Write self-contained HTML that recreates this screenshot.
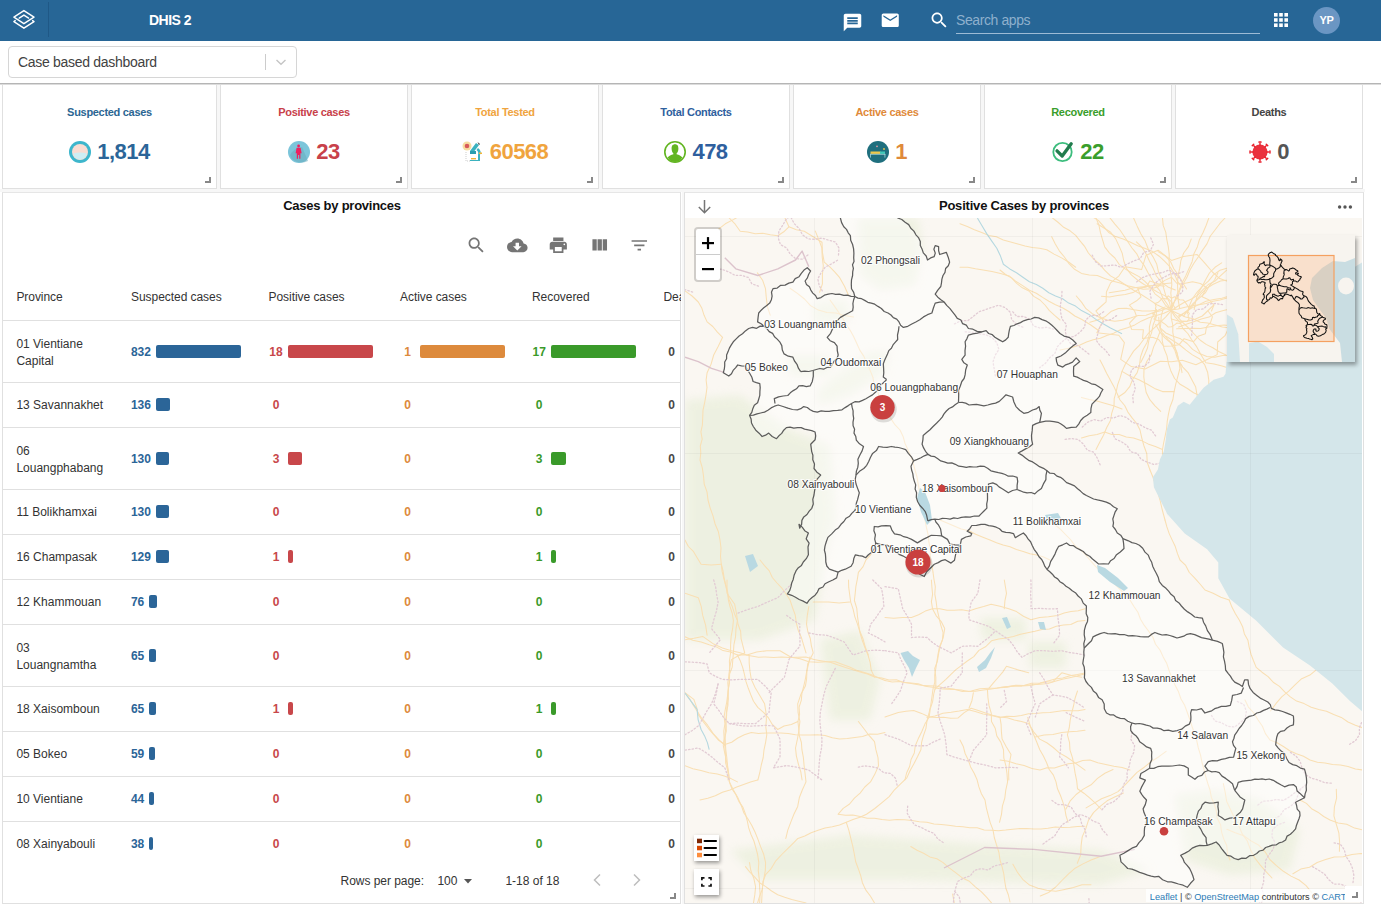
<!DOCTYPE html>
<html><head><meta charset="utf-8">
<style>
*{box-sizing:border-box}
html,body{margin:0;padding:0;width:1381px;height:905px;overflow:hidden;background:#fff;font-family:"Liberation Sans",sans-serif;color:#212121}
.a{position:absolute}
#hdr{left:0;top:0;width:1381px;height:41px;background:#276696}
.card{background:#fff;border:1px solid #e0e0e0;border-top:none}
.ct{position:absolute;left:0;right:0;top:21px;text-align:center;font-size:11px;font-weight:700;letter-spacing:-0.3px}
.cv{position:absolute;left:0;right:0;top:54px;text-align:center;font-size:22px;font-weight:700;letter-spacing:-0.5px;height:26px;line-height:26px;white-space:nowrap}
.cv svg{vertical-align:top;margin-top:2px;margin-right:6px}
.rh{position:absolute;width:6px;height:6px;border-right:2px solid #888;border-bottom:2px solid #888}
.t12{font-size:12px;line-height:17px;color:#333}
.b{font-weight:700;font-size:12px}
.hline{position:absolute;left:3px;width:677px;height:1px;background:#e0e0e0}
.bar{position:absolute;height:13px;border-radius:2px}
</style></head><body>
<div id="hdr" class="a">
  <!-- logo -->
  <svg class="a" style="left:0;top:0" width="48" height="40" viewBox="0 0 48 40" fill="none" stroke="#fff" stroke-width="1.45" stroke-linejoin="round" stroke-linecap="round">
    <path d="M23.9 10.6 L34 17.2 L23.9 23.7 L13.9 17.2 Z"/>
    <path d="M19.2 18.1 L23.9 15.1 L28.6 18.1"/>
    <path d="M15.2 20.6 L13.9 21.6 L23.9 28.2 L34 21.6 L32.6 20.6"/>
  </svg>
  <div class="a" style="left:48px;top:2px;width:1px;height:35px;background:#1f5886"></div>
  <div class="a" style="left:149px;top:12px;font-size:14px;font-weight:700;color:#fff;letter-spacing:-0.5px;line-height:17px">DHIS 2</div>
  <!-- chat -->
  <svg class="a" style="left:842px;top:12px" width="21" height="21" viewBox="0 0 24 24" fill="#fff"><path d="M20 2H4c-1.1 0-1.99.9-1.99 2L2 22l4-4h14c1.1 0 2-.9 2-2V4c0-1.1-.9-2-2-2zM6 9h12v2H6V9zm0 3h12v2H6v-2zm12-4H6V6h12v2z"/></svg>
  <!-- mail -->
  <svg class="a" style="left:880px;top:10px" width="20.5" height="20.5" viewBox="0 0 24 24" fill="#fff"><path d="M20 4H4c-1.1 0-1.99.9-1.99 2L2 18c0 1.1.9 2 2 2h16c1.1 0 2-.9 2-2V6c0-1.1-.9-2-2-2zm0 4l-8 5-8-5V6l8 5 8-5v2z"/></svg>
  <!-- search -->
  <svg class="a" style="left:929px;top:10px" width="20.5" height="20.5" viewBox="0 0 24 24" fill="#fff"><path d="M15.5 14h-.79l-.28-.27C15.41 12.59 16 11.11 16 9.5 16 5.91 13.09 3 9.5 3S3 5.91 3 9.5 5.91 16 9.5 16c1.61 0 3.09-.59 4.23-1.57l.27.28v.79l5 4.99L20.49 19l-4.99-5zm-6 0C7.01 14 5 11.99 5 9.5S7.01 5 9.5 5 14 7.01 14 9.5 11.99 14 9.5 14z"/></svg>
  <div class="a" style="left:956px;top:12px;font-size:14px;color:#8eb0cd;letter-spacing:-0.4px;line-height:17px">Search apps</div>
  <div class="a" style="left:956px;top:33px;width:304px;height:1px;background:#9dbbd5"></div>
  <!-- apps -->
  <svg class="a" style="left:1274px;top:13px" width="14" height="14" viewBox="0 0 14 14" fill="#fff">
    <rect x="0" y="0" width="3.6" height="3.6"/><rect x="5.2" y="0" width="3.6" height="3.6"/><rect x="10.4" y="0" width="3.6" height="3.6"/>
    <rect x="0" y="5.2" width="3.6" height="3.6"/><rect x="5.2" y="5.2" width="3.6" height="3.6"/><rect x="10.4" y="5.2" width="3.6" height="3.6"/>
    <rect x="0" y="10.4" width="3.6" height="3.6"/><rect x="5.2" y="10.4" width="3.6" height="3.6"/><rect x="10.4" y="10.4" width="3.6" height="3.6"/>
  </svg>
  <div class="a" style="left:1313px;top:7px;width:27px;height:27px;border-radius:50%;background:#6b96c3;color:#fff;font-size:11px;font-weight:700;text-align:center;line-height:27px;letter-spacing:-0.3px">YP</div>
</div>

<!-- dashboard selector -->
<div class="a" style="left:8px;top:46px;width:289px;height:32px;border:1px solid #d6d6d6;border-radius:4px;background:#fff"></div>
<div class="a" style="left:18px;top:54px;font-size:14px;color:#424242;letter-spacing:-0.3px;line-height:17px">Case based dashboard</div>
<div class="a" style="left:265px;top:54px;width:1px;height:16px;background:#ccc"></div>
<svg class="a" style="left:275px;top:56px" width="12" height="12" viewBox="0 0 12 12" fill="none" stroke="#c5c5c5" stroke-width="1.4"><path d="M1.5 4 L6 8.2 L10.5 4"/></svg>

<!-- shadow line -->
<div class="a" style="left:0;top:83px;width:1381px;height:1px;background:#b5b5b5"></div>
<div class="a" style="left:0;top:84px;width:1381px;height:1px;background:#dcdcdc"></div>

<div class="a card" style="left:2px;top:85px;width:215px;height:104px"><div class="ct" style="color:#2c6693">Suspected cases</div><div class="cv" style="color:#2b6598"><svg width="22" height="22" viewBox="0 0 22 22"><circle cx="11" cy="11" r="11" fill="#3db6cc"/><circle cx="11" cy="11" r="8" fill="#f9dcd2"/><path d="M4.2 12.5 Q11 10.5 17.8 12.5 Q17 17.5 11 18.8 Q5 17.5 4.2 12.5Z" fill="#cdeef4"/></svg>1,814</div><div class="rh" style="right:5px;bottom:5px"></div></div>
<div class="a card" style="left:220px;top:85px;width:188px;height:104px"><div class="ct" style="color:#c8414a">Positive cases</div><div class="cv" style="color:#c8414a"><svg width="22" height="22" viewBox="0 0 22 22"><circle cx="11" cy="11" r="11" fill="#7cc5da"/><path d="M2 14 Q6 7 14 6 L20 20 Q11 24 4 18Z" fill="#6aaec0" opacity=".6"/><circle cx="10.6" cy="5" r="1.4" fill="#ee1f5f"/><path d="M8.6 6.8h4l1 5.4h-1.2v5.6h-1.2v-3.8h-1.2v3.8H8.8v-5.6H7.6z" fill="#ee1f5f"/></svg>23</div><div class="rh" style="right:5px;bottom:5px"></div></div>
<div class="a card" style="left:411px;top:85px;width:188px;height:104px"><div class="ct" style="color:#f0a43e">Total Tested</div><div class="cv" style="color:#f0a43e"><svg width="22" height="22" viewBox="0 0 22 22"><circle cx="5" cy="5" r="4.5" fill="#f6dca0"/><circle cx="5" cy="5" r="2.3" fill="#d85a5a"/><path d="M14 2 L17 4 L11 12 L8 10Z" fill="#3bb2bf"/><path d="M8 10 h6 v3 h-6z" fill="#2a9eb0"/><path d="M16 7 Q20 10 18 14 L18 20 H8 V19 H16 V14 Q17 11 14.5 9Z" fill="#3bb2bf"/><rect x="9" y="17" width="5" height="1.4" fill="#f3b536"/><rect x="17" y="11.5" width="3" height="1.5" fill="#f3b536"/><path d="M4 11 V20 H8" stroke="#999" stroke-width=".5" fill="none" stroke-dasharray="1 1"/><path d="M15.5 1 L18 3 L17 4 Z" fill="#333"/></svg>60568</div><div class="rh" style="right:5px;bottom:5px"></div></div>
<div class="a card" style="left:602px;top:85px;width:188px;height:104px"><div class="ct" style="color:#2f5f9e">Total Contacts</div><div class="cv" style="color:#2f5f9e"><svg width="22" height="22" viewBox="0 0 22 22"><circle cx="11" cy="11" r="10.2" fill="#fff" stroke="#62b521" stroke-width="1.6"/><path d="M11 3.3 C8.2 3.3 7.6 5.5 7.6 7.5 C7.6 10 8.6 11.8 9.4 12.4 L9.4 13.2 C7 14 4.8 14.8 3.6 16.4 Q6.5 21 11 21 Q15.5 21 18.4 16.4 C17.2 14.8 15 14 12.6 13.2 L12.6 12.4 C13.4 11.8 14.4 10 14.4 7.5 C14.4 5.5 13.8 3.3 11 3.3Z" fill="#62b521"/></svg>478</div><div class="rh" style="right:5px;bottom:5px"></div></div>
<div class="a card" style="left:793px;top:85px;width:188px;height:104px"><div class="ct" style="color:#df8a3a">Active cases</div><div class="cv" style="color:#df8a3a"><svg width="22" height="22" viewBox="0 0 22 22"><circle cx="11" cy="11" r="11" fill="#1f6f7e"/><rect x="3.5" y="10.5" width="10" height="2.4" fill="#efc94c"/><rect x="13" y="10.5" width="5" height="2.4" fill="#40c9b9"/><rect x="3.3" y="12.9" width="15" height="0.7" fill="#b8dfe4"/><rect x="3.3" y="12.9" width="0.7" height="3.7" fill="#b8dfe4"/><rect x="17.6" y="12.9" width="0.7" height="3.7" fill="#b8dfe4"/><circle cx="10" cy="5.3" r="0.9" fill="#e39aa2"/><circle cx="17" cy="8" r="0.9" fill="#efc94c"/></svg>1</div><div class="rh" style="right:5px;bottom:5px"></div></div>
<div class="a card" style="left:984px;top:85px;width:188px;height:104px"><div class="ct" style="color:#3a9e2c">Recovered</div><div class="cv" style="color:#3a9e2c"><svg width="22" height="22" viewBox="0 0 22 22"><circle cx="10.5" cy="11" r="9.2" fill="none" stroke="#3cbd7d" stroke-width="1.8"/><path d="M5 9.8 L10.2 15 L19.2 2.8" fill="none" stroke="#217c4d" stroke-width="3.3" stroke-linecap="round" stroke-linejoin="round"/></svg>22</div><div class="rh" style="right:5px;bottom:5px"></div></div>
<div class="a card" style="left:1175px;top:85px;width:188px;height:104px"><div class="ct" style="color:#444">Deaths</div><div class="cv" style="color:#555"><svg width="22" height="22" viewBox="0 0 22 22"><g fill="#e8202c"><circle cx="11" cy="11" r="7.6" opacity=".92"/><g transform="rotate(0 11 11)"><rect x="10.3" y="1.6" width="1.4" height="3"/><rect x="9.3" y="0.3" width="3.4" height="1.5" rx=".6"/></g><g transform="rotate(45 11 11)"><rect x="10.3" y="1.6" width="1.4" height="3"/><rect x="9.3" y="0.3" width="3.4" height="1.5" rx=".6"/></g><g transform="rotate(90 11 11)"><rect x="10.3" y="1.6" width="1.4" height="3"/><rect x="9.3" y="0.3" width="3.4" height="1.5" rx=".6"/></g><g transform="rotate(135 11 11)"><rect x="10.3" y="1.6" width="1.4" height="3"/><rect x="9.3" y="0.3" width="3.4" height="1.5" rx=".6"/></g><g transform="rotate(180 11 11)"><rect x="10.3" y="1.6" width="1.4" height="3"/><rect x="9.3" y="0.3" width="3.4" height="1.5" rx=".6"/></g><g transform="rotate(225 11 11)"><rect x="10.3" y="1.6" width="1.4" height="3"/><rect x="9.3" y="0.3" width="3.4" height="1.5" rx=".6"/></g><g transform="rotate(270 11 11)"><rect x="10.3" y="1.6" width="1.4" height="3"/><rect x="9.3" y="0.3" width="3.4" height="1.5" rx=".6"/></g><g transform="rotate(315 11 11)"><rect x="10.3" y="1.6" width="1.4" height="3"/><rect x="9.3" y="0.3" width="3.4" height="1.5" rx=".6"/></g></g></svg>0</div><div class="rh" style="right:5px;bottom:5px"></div></div>
<div class="a card" style="left:2px;top:192px;width:679px;height:712px;border-top:1px solid #e6e6e6"></div>
<div class="a" style="left:2px;top:198px;width:680px;text-align:center;font-size:13px;font-weight:700;color:#111;letter-spacing:-0.25px;line-height:16px">Cases by provinces</div>
<svg class="a" style="left:465.7px;top:234.8px" width="20.6" height="20.6" viewBox="0 0 24 24" fill="#757575"><path d="M15.5 14h-.79l-.28-.27C15.41 12.59 16 11.11 16 9.5 16 5.91 13.09 3 9.5 3S3 5.91 3 9.5 5.91 16 9.5 16c1.61 0 3.09-.59 4.23-1.57l.27.28v.79l5 4.99L20.49 19l-4.99-5zm-6 0C7.01 14 5 11.99 5 9.5S7.01 5 9.5 5 14 7.01 14 9.5 11.99 14 9.5 14z"/></svg>
<svg class="a" style="left:507.1px;top:234.8px" width="20.6" height="20.6" viewBox="0 0 24 24" fill="#757575"><path d="M19.35 10.04C18.67 6.59 15.64 4 12 4 9.11 4 6.6 5.64 5.35 8.04 2.34 8.36 0 10.91 0 14c0 3.31 2.69 6 6 6h13c2.76 0 5-2.24 5-5 0-2.64-2.05-4.78-4.65-4.96zM17 13l-5 5-5-5h3V9h4v4h3z"/></svg>
<svg class="a" style="left:547.7px;top:234.8px" width="20.6" height="20.6" viewBox="0 0 24 24" fill="#757575"><path d="M19 8H5c-1.66 0-3 1.34-3 3v6h4v4h12v-4h4v-6c0-1.66-1.34-3-3-3zm-3 11H8v-5h8v5zm3-7c-.55 0-1-.45-1-1s.45-1 1-1 1 .45 1 1-.45 1-1 1zm-1-9H6v4h12V3z"/></svg>
<svg class="a" style="left:588.7px;top:234.8px" width="20.6" height="20.6" viewBox="0 0 24 24" fill="#757575"><path d="M10 18h5V5h-5v13zm-6 0h5V5H4v13zM16 5v13h5V5h-5z"/></svg>
<svg class="a" style="left:629.1px;top:234.8px" width="20.6" height="20.6" viewBox="0 0 24 24" fill="#757575"><path d="M10 18h4v-2h-4v2zM3 6v2h18V6H3zm3 7h12v-2H6v2z"/></svg>
<div class="a" style="left:16.4px;top:289.2px;font-size:12px;line-height:17px;white-space:nowrap;color:#333;letter-spacing:-0.05px">Province</div>
<div class="a" style="left:131px;top:289.2px;font-size:12px;line-height:17px;white-space:nowrap;color:#333;letter-spacing:-0.05px">Suspected cases</div>
<div class="a" style="left:268.5px;top:289.2px;font-size:12px;line-height:17px;white-space:nowrap;color:#333;letter-spacing:-0.05px">Positive cases</div>
<div class="a" style="left:400px;top:289.2px;font-size:12px;line-height:17px;white-space:nowrap;color:#333;letter-spacing:-0.05px">Active cases</div>
<div class="a" style="left:532px;top:289.2px;font-size:12px;line-height:17px;white-space:nowrap;color:#333;letter-spacing:-0.05px">Recovered</div>
<div class="a" style="left:663.5px;top:289.2px;font-size:12px;line-height:17px;white-space:nowrap;color:#333;letter-spacing:-0.05px;width:17px;overflow:hidden">Dea</div>
<div class="hline" style="top:320px"></div>
<div class="a" style="left:16.4px;top:335.5px;font-size:12px;line-height:17px;white-space:nowrap;color:#333">01 Vientiane<br>Capital</div>
<div class="a" style="left:131px;top:344.1px;font-size:12px;line-height:17px;white-space:nowrap;color:#2b6598;font-weight:700;letter-spacing:-0.1px">832</div>
<div class="bar" style="left:155.8px;top:344.8px;width:85.0px;background:#2b6598"></div>
<div class="a" style="left:256.0px;width:40px;text-align:center;top:344.1px;font-size:12px;line-height:17px;white-space:nowrap;color:#c8474a;font-weight:700">18</div>
<div class="bar" style="left:288.3px;top:344.8px;width:85.0px;background:#c8474a"></div>
<div class="a" style="left:387.5px;width:40px;text-align:center;top:344.1px;font-size:12px;line-height:17px;white-space:nowrap;color:#dd8a3c;font-weight:700">1</div>
<div class="bar" style="left:420px;top:344.8px;width:85px;background:#dd8a3c"></div>
<div class="a" style="left:519.2px;width:40px;text-align:center;top:344.1px;font-size:12px;line-height:17px;white-space:nowrap;color:#3a9a2a;font-weight:700">17</div>
<div class="bar" style="left:551px;top:344.8px;width:85.0px;background:#3a9a2a"></div>
<div class="a" style="left:662.5px;width:18px;text-align:center;top:344.1px;font-size:12px;line-height:17px;white-space:nowrap;color:#484848;font-weight:700">0</div>
<div class="hline" style="top:382px"></div>
<div class="a" style="left:16.4px;top:397.3px;font-size:12px;line-height:17px;white-space:nowrap;color:#333">13 Savannakhet</div>
<div class="a" style="left:131px;top:397.3px;font-size:12px;line-height:17px;white-space:nowrap;color:#2b6598;font-weight:700;letter-spacing:-0.1px">136</div>
<div class="bar" style="left:155.8px;top:398.0px;width:13.9px;background:#2b6598"></div>
<div class="a" style="left:256.0px;width:40px;text-align:center;top:397.3px;font-size:12px;line-height:17px;white-space:nowrap;color:#c8474a;font-weight:700">0</div>
<div class="a" style="left:387.5px;width:40px;text-align:center;top:397.3px;font-size:12px;line-height:17px;white-space:nowrap;color:#dd8a3c;font-weight:700">0</div>
<div class="a" style="left:519.2px;width:40px;text-align:center;top:397.3px;font-size:12px;line-height:17px;white-space:nowrap;color:#3a9a2a;font-weight:700">0</div>
<div class="a" style="left:662.5px;width:18px;text-align:center;top:397.3px;font-size:12px;line-height:17px;white-space:nowrap;color:#484848;font-weight:700">0</div>
<div class="hline" style="top:427px"></div>
<div class="a" style="left:16.4px;top:442.5px;font-size:12px;line-height:17px;white-space:nowrap;color:#333">06<br>Louangphabang</div>
<div class="a" style="left:131px;top:451.1px;font-size:12px;line-height:17px;white-space:nowrap;color:#2b6598;font-weight:700;letter-spacing:-0.1px">130</div>
<div class="bar" style="left:155.8px;top:451.8px;width:13.3px;background:#2b6598"></div>
<div class="a" style="left:256.0px;width:40px;text-align:center;top:451.1px;font-size:12px;line-height:17px;white-space:nowrap;color:#c8474a;font-weight:700">3</div>
<div class="bar" style="left:288.3px;top:451.8px;width:14.2px;background:#c8474a"></div>
<div class="a" style="left:387.5px;width:40px;text-align:center;top:451.1px;font-size:12px;line-height:17px;white-space:nowrap;color:#dd8a3c;font-weight:700">0</div>
<div class="a" style="left:519.2px;width:40px;text-align:center;top:451.1px;font-size:12px;line-height:17px;white-space:nowrap;color:#3a9a2a;font-weight:700">3</div>
<div class="bar" style="left:551px;top:451.8px;width:15.0px;background:#3a9a2a"></div>
<div class="a" style="left:662.5px;width:18px;text-align:center;top:451.1px;font-size:12px;line-height:17px;white-space:nowrap;color:#484848;font-weight:700">0</div>
<div class="hline" style="top:489px"></div>
<div class="a" style="left:16.4px;top:504.3px;font-size:12px;line-height:17px;white-space:nowrap;color:#333">11 Bolikhamxai</div>
<div class="a" style="left:131px;top:504.3px;font-size:12px;line-height:17px;white-space:nowrap;color:#2b6598;font-weight:700;letter-spacing:-0.1px">130</div>
<div class="bar" style="left:155.8px;top:505.0px;width:13.3px;background:#2b6598"></div>
<div class="a" style="left:256.0px;width:40px;text-align:center;top:504.3px;font-size:12px;line-height:17px;white-space:nowrap;color:#c8474a;font-weight:700">0</div>
<div class="a" style="left:387.5px;width:40px;text-align:center;top:504.3px;font-size:12px;line-height:17px;white-space:nowrap;color:#dd8a3c;font-weight:700">0</div>
<div class="a" style="left:519.2px;width:40px;text-align:center;top:504.3px;font-size:12px;line-height:17px;white-space:nowrap;color:#3a9a2a;font-weight:700">0</div>
<div class="a" style="left:662.5px;width:18px;text-align:center;top:504.3px;font-size:12px;line-height:17px;white-space:nowrap;color:#484848;font-weight:700">0</div>
<div class="hline" style="top:534px"></div>
<div class="a" style="left:16.4px;top:549.3px;font-size:12px;line-height:17px;white-space:nowrap;color:#333">16 Champasak</div>
<div class="a" style="left:131px;top:549.3px;font-size:12px;line-height:17px;white-space:nowrap;color:#2b6598;font-weight:700;letter-spacing:-0.1px">129</div>
<div class="bar" style="left:155.8px;top:550.0px;width:13.2px;background:#2b6598"></div>
<div class="a" style="left:256.0px;width:40px;text-align:center;top:549.3px;font-size:12px;line-height:17px;white-space:nowrap;color:#c8474a;font-weight:700">1</div>
<div class="bar" style="left:288.3px;top:550.0px;width:4.7px;background:#c8474a"></div>
<div class="a" style="left:387.5px;width:40px;text-align:center;top:549.3px;font-size:12px;line-height:17px;white-space:nowrap;color:#dd8a3c;font-weight:700">0</div>
<div class="a" style="left:519.2px;width:40px;text-align:center;top:549.3px;font-size:12px;line-height:17px;white-space:nowrap;color:#3a9a2a;font-weight:700">1</div>
<div class="bar" style="left:551px;top:550.0px;width:5.0px;background:#3a9a2a"></div>
<div class="a" style="left:662.5px;width:18px;text-align:center;top:549.3px;font-size:12px;line-height:17px;white-space:nowrap;color:#484848;font-weight:700">0</div>
<div class="hline" style="top:579px"></div>
<div class="a" style="left:16.4px;top:594.3px;font-size:12px;line-height:17px;white-space:nowrap;color:#333">12 Khammouan</div>
<div class="a" style="left:131px;top:594.3px;font-size:12px;line-height:17px;white-space:nowrap;color:#2b6598;font-weight:700;letter-spacing:-0.1px">76</div>
<div class="bar" style="left:149.1px;top:595.0px;width:7.8px;background:#2b6598"></div>
<div class="a" style="left:256.0px;width:40px;text-align:center;top:594.3px;font-size:12px;line-height:17px;white-space:nowrap;color:#c8474a;font-weight:700">0</div>
<div class="a" style="left:387.5px;width:40px;text-align:center;top:594.3px;font-size:12px;line-height:17px;white-space:nowrap;color:#dd8a3c;font-weight:700">0</div>
<div class="a" style="left:519.2px;width:40px;text-align:center;top:594.3px;font-size:12px;line-height:17px;white-space:nowrap;color:#3a9a2a;font-weight:700">0</div>
<div class="a" style="left:662.5px;width:18px;text-align:center;top:594.3px;font-size:12px;line-height:17px;white-space:nowrap;color:#484848;font-weight:700">0</div>
<div class="hline" style="top:624px"></div>
<div class="a" style="left:16.4px;top:639.5px;font-size:12px;line-height:17px;white-space:nowrap;color:#333">03<br>Louangnamtha</div>
<div class="a" style="left:131px;top:648.1px;font-size:12px;line-height:17px;white-space:nowrap;color:#2b6598;font-weight:700;letter-spacing:-0.1px">65</div>
<div class="bar" style="left:149.1px;top:648.8px;width:6.6px;background:#2b6598"></div>
<div class="a" style="left:256.0px;width:40px;text-align:center;top:648.1px;font-size:12px;line-height:17px;white-space:nowrap;color:#c8474a;font-weight:700">0</div>
<div class="a" style="left:387.5px;width:40px;text-align:center;top:648.1px;font-size:12px;line-height:17px;white-space:nowrap;color:#dd8a3c;font-weight:700">0</div>
<div class="a" style="left:519.2px;width:40px;text-align:center;top:648.1px;font-size:12px;line-height:17px;white-space:nowrap;color:#3a9a2a;font-weight:700">0</div>
<div class="a" style="left:662.5px;width:18px;text-align:center;top:648.1px;font-size:12px;line-height:17px;white-space:nowrap;color:#484848;font-weight:700">0</div>
<div class="hline" style="top:686px"></div>
<div class="a" style="left:16.4px;top:701.3px;font-size:12px;line-height:17px;white-space:nowrap;color:#333">18 Xaisomboun</div>
<div class="a" style="left:131px;top:701.3px;font-size:12px;line-height:17px;white-space:nowrap;color:#2b6598;font-weight:700;letter-spacing:-0.1px">65</div>
<div class="bar" style="left:149.1px;top:702.0px;width:6.6px;background:#2b6598"></div>
<div class="a" style="left:256.0px;width:40px;text-align:center;top:701.3px;font-size:12px;line-height:17px;white-space:nowrap;color:#c8474a;font-weight:700">1</div>
<div class="bar" style="left:288.3px;top:702.0px;width:4.7px;background:#c8474a"></div>
<div class="a" style="left:387.5px;width:40px;text-align:center;top:701.3px;font-size:12px;line-height:17px;white-space:nowrap;color:#dd8a3c;font-weight:700">0</div>
<div class="a" style="left:519.2px;width:40px;text-align:center;top:701.3px;font-size:12px;line-height:17px;white-space:nowrap;color:#3a9a2a;font-weight:700">1</div>
<div class="bar" style="left:551px;top:702.0px;width:5.0px;background:#3a9a2a"></div>
<div class="a" style="left:662.5px;width:18px;text-align:center;top:701.3px;font-size:12px;line-height:17px;white-space:nowrap;color:#484848;font-weight:700">0</div>
<div class="hline" style="top:731px"></div>
<div class="a" style="left:16.4px;top:746.3px;font-size:12px;line-height:17px;white-space:nowrap;color:#333">05 Bokeo</div>
<div class="a" style="left:131px;top:746.3px;font-size:12px;line-height:17px;white-space:nowrap;color:#2b6598;font-weight:700;letter-spacing:-0.1px">59</div>
<div class="bar" style="left:149.1px;top:747.0px;width:6.0px;background:#2b6598"></div>
<div class="a" style="left:256.0px;width:40px;text-align:center;top:746.3px;font-size:12px;line-height:17px;white-space:nowrap;color:#c8474a;font-weight:700">0</div>
<div class="a" style="left:387.5px;width:40px;text-align:center;top:746.3px;font-size:12px;line-height:17px;white-space:nowrap;color:#dd8a3c;font-weight:700">0</div>
<div class="a" style="left:519.2px;width:40px;text-align:center;top:746.3px;font-size:12px;line-height:17px;white-space:nowrap;color:#3a9a2a;font-weight:700">0</div>
<div class="a" style="left:662.5px;width:18px;text-align:center;top:746.3px;font-size:12px;line-height:17px;white-space:nowrap;color:#484848;font-weight:700">0</div>
<div class="hline" style="top:776px"></div>
<div class="a" style="left:16.4px;top:791.3px;font-size:12px;line-height:17px;white-space:nowrap;color:#333">10 Vientiane</div>
<div class="a" style="left:131px;top:791.3px;font-size:12px;line-height:17px;white-space:nowrap;color:#2b6598;font-weight:700;letter-spacing:-0.1px">44</div>
<div class="bar" style="left:149.1px;top:792.0px;width:4.5px;background:#2b6598"></div>
<div class="a" style="left:256.0px;width:40px;text-align:center;top:791.3px;font-size:12px;line-height:17px;white-space:nowrap;color:#c8474a;font-weight:700">0</div>
<div class="a" style="left:387.5px;width:40px;text-align:center;top:791.3px;font-size:12px;line-height:17px;white-space:nowrap;color:#dd8a3c;font-weight:700">0</div>
<div class="a" style="left:519.2px;width:40px;text-align:center;top:791.3px;font-size:12px;line-height:17px;white-space:nowrap;color:#3a9a2a;font-weight:700">0</div>
<div class="a" style="left:662.5px;width:18px;text-align:center;top:791.3px;font-size:12px;line-height:17px;white-space:nowrap;color:#484848;font-weight:700">0</div>
<div class="hline" style="top:821px"></div>
<div class="a" style="left:16.4px;top:836.3px;font-size:12px;line-height:17px;white-space:nowrap;color:#333">08 Xainyabouli</div>
<div class="a" style="left:131px;top:836.3px;font-size:12px;line-height:17px;white-space:nowrap;color:#2b6598;font-weight:700;letter-spacing:-0.1px">38</div>
<div class="bar" style="left:149.1px;top:837.0px;width:3.9px;background:#2b6598"></div>
<div class="a" style="left:256.0px;width:40px;text-align:center;top:836.3px;font-size:12px;line-height:17px;white-space:nowrap;color:#c8474a;font-weight:700">0</div>
<div class="a" style="left:387.5px;width:40px;text-align:center;top:836.3px;font-size:12px;line-height:17px;white-space:nowrap;color:#dd8a3c;font-weight:700">0</div>
<div class="a" style="left:519.2px;width:40px;text-align:center;top:836.3px;font-size:12px;line-height:17px;white-space:nowrap;color:#3a9a2a;font-weight:700">0</div>
<div class="a" style="left:662.5px;width:18px;text-align:center;top:836.3px;font-size:12px;line-height:17px;white-space:nowrap;color:#484848;font-weight:700">0</div>
<div class="a" style="left:340.6px;top:873.3px;font-size:12px;line-height:17px;white-space:nowrap;color:#333;letter-spacing:-0.05px">Rows per page:</div>
<div class="a" style="left:437.4px;top:872.6px;font-size:12px;line-height:17px;white-space:nowrap;color:#333">100</div>
<svg class="a" style="left:464px;top:879px" width="8" height="5" viewBox="0 0 8 5"><path d="M0 0h8L4 4.5z" fill="#555"/></svg>
<div class="a" style="left:505.4px;top:873.3px;font-size:12px;line-height:17px;white-space:nowrap;color:#333">1-18 of 18</div>
<svg class="a" style="left:592px;top:873px" width="10" height="14" viewBox="0 0 10 14" fill="none" stroke="#bdbdbd" stroke-width="1.5"><path d="M8 1.5 L2.5 7 L8 12.5"/></svg>
<svg class="a" style="left:632px;top:873px" width="10" height="14" viewBox="0 0 10 14" fill="none" stroke="#bdbdbd" stroke-width="1.5"><path d="M2 1.5 L7.5 7 L2 12.5"/></svg>
<div class="rh" style="left:670px;top:893px"></div>
<div class="a card" style="left:684px;top:192px;width:680px;height:712px;border-top:1px solid #e6e6e6"></div>
<div class="a" style="left:684px;top:198px;width:680px;text-align:center;font-size:13px;font-weight:700;color:#111;letter-spacing:-0.2px;line-height:16px">Positive Cases by provinces</div>
<svg class="a" style="left:697px;top:199px" width="15" height="15" viewBox="0 0 15 15" fill="none" stroke="#757575" stroke-width="1.5"><path d="M7.5 1v12.5M1.8 8l5.7 5.7L13.2 8"/></svg>
<svg class="a" style="left:1337px;top:204px" width="16" height="6" viewBox="0 0 16 6" fill="#555"><circle cx="2.6" cy="3" r="1.7"/><circle cx="8" cy="3" r="1.7"/><circle cx="13.4" cy="3" r="1.7"/></svg>
<svg class="a" style="left:685px;top:218px" width="677" height="685" viewBox="685 218 677 685">
<rect x="685" y="218" width="677" height="685" fill="#faf7f2"/>
<defs><filter id="bl" x="-20%" y="-20%" width="140%" height="140%"><feGaussianBlur stdDeviation="5"/></filter></defs>
<g filter="url(#bl)" opacity=".6">
<polygon points="685.0,400.0 740.0,395.0 790.0,430.0 830.0,445.0 835.0,520.0 825.0,560.0 815.0,620.0 760.0,640.0 685.0,640.0" fill="#e6edd6"/>
<polygon points="858.0,218.0 918.0,218.0 922.0,250.0 915.0,285.0 880.0,290.0 860.0,275.0" fill="#e6edd6"/>
<polygon points="818.0,405.0 850.0,395.0 885.0,372.0 890.0,352.0 870.0,352.0 840.0,372.0 818.0,390.0" fill="#e6edd6"/>
<polygon points="813.0,303.0 847.0,300.0 850.0,322.0 815.0,325.0" fill="#e6edd6"/>
<polygon points="789.0,356.0 829.0,356.0 830.0,374.0 790.0,376.0" fill="#e6edd6"/>
<polygon points="1175.0,795.0 1215.0,790.0 1260.0,800.0 1300.0,830.0 1290.0,870.0 1230.0,875.0 1185.0,860.0" fill="#e6edd6"/>
<polygon points="730.0,850.0 850.0,835.0 1000.0,845.0 1100.0,850.0 1150.0,870.0 1100.0,885.0 900.0,880.0 760.0,880.0" fill="#e6edd6"/>
<polygon points="820.0,640.0 860.0,630.0 880.0,680.0 870.0,720.0 830.0,720.0" fill="#e6edd6"/>
<polygon points="1028.0,642.0 1066.0,642.0 1066.0,668.0 1030.0,668.0" fill="#e6edd6"/>
<polygon points="980.0,618.0 1026.0,618.0 1026.0,640.0 982.0,640.0" fill="#e6edd6"/>
</g>
<g fill="none" stroke="#f9dfb3" stroke-width="1.05" stroke-linejoin="round" stroke-linecap="round">
<polyline points="685.0,290.9 692.1,296.0 698.3,302.0 701.9,308.3 704.1,315.3 707.1,321.9 712.8,326.5 717.4,332.2 722.6,337.3 718.3,346.2 713.7,355.0 711.1,364.1 707.1,372.7 706.1,380.0 707.0,387.5 706.0,394.8 704.7,402.5 703.0,410.2 702.7,418.0 702.4,425.0 700.9,431.9 702.2,439.1 700.3,446.0 700.8,453.0 700.0,460.0 702.3,467.9 703.5,475.9 704.2,484.1 707.0,491.9 708.0,500.0 710.2,508.1 713.0,515.9 715.1,524.0 718.4,531.8 720.0,540.0 721.0,548.0 720.5,556.2 721.3,564.2 723.1,571.2 724.2,578.3 725.9,585.3 727.7,592.3 728.3,599.6 730.0,606.6 732.3,613.5 733.4,620.6 732.6,628.7 731.1,636.7 730.6,644.8 730.6,653.0 729.4,661.0 729.7,668.4 728.8,675.7 727.8,683.0 728.5,690.3 727.6,697.6 728.0,705.0 726.5,712.3 725.9,719.6 725.9,726.9 725.0,734.2 725.3,741.6 725.8,749.7 726.8,757.7 727.6,765.8 728.7,773.8 729.4,781.9 731.9,788.7 735.9,794.8 738.8,801.4 743.0,807.4 745.5,814.2 747.3,821.0 748.7,827.9 751.0,834.5 753.9,841.0 755.8,847.7 757.6,854.5 758.8,862.5 758.3,870.6 759.2,878.7 759.6,886.7 760.1,894.8 759.6,902.9"/>
<polyline points="729.2,218.0 735.2,224.2 740.2,231.3 747.7,232.0 755.2,233.7 762.8,233.2 770.3,234.7 777.8,235.7 783.8,231.8 788.9,226.8 796.4,229.7 804.3,231.3 813.2,236.7 822.0,242.3 822.4,252.3 824.2,262.2 829.8,266.9 834.9,272.1 839.7,277.7 844.5,286.3 848.5,295.3"/>
<polyline points="785.0,218.0 788.9,226.8"/>
<polyline points="1000.0,687.6 1008.0,686.5 1016.1,685.4 1024.2,685.5 1032.3,684.7 1040.4,684.3 1047.9,683.4 1055.1,681.2 1062.4,679.2 1069.7,677.7 1077.1,676.1 1084.3,674.1"/>
<polyline points="1077.5,691.0 1075.1,698.1 1073.6,705.5 1071.8,712.7 1070.2,720.1 1069.3,727.5 1067.4,734.8 1069.5,742.4 1070.0,750.2 1072.5,757.8 1073.9,765.5 1075.1,773.2 1076.7,780.9 1077.5,788.7 1083.9,793.2 1089.9,798.2 1095.6,803.4 1101.1,809.0"/>
<polyline points="760.0,560.0 764.5,565.6 769.3,570.9 772.3,577.5 777.0,583.0 781.9,588.2 786.1,594.0 790.0,600.0 792.5,607.5 795.2,614.9 796.3,622.9 798.3,630.5 801.5,637.8 803.7,645.3 806.0,652.9"/>
<polyline points="1000.0,760.0 1008.2,761.3 1016.1,763.7 1024.1,765.6 1031.9,768.6 1040.0,770.0 1047.0,767.7 1054.4,767.9 1061.4,765.8 1068.4,763.7 1075.7,762.9 1082.7,760.6 1090.0,760.0 1097.8,762.8 1105.8,764.6 1113.9,766.3 1122.1,767.6 1130.0,770.0"/>
<polyline points="960.0,740.0 963.3,746.4 965.1,753.5 968.3,760.0 970.6,766.9 974.2,773.2 977.1,779.8 978.9,786.9 981.4,793.7 985.0,800.0 986.3,807.6 988.2,815.1 990.2,822.6 993.0,829.9 994.3,837.5 996.5,844.9 998.9,852.3 1000.0,860.0 1002.1,866.9 1003.8,873.9 1004.7,881.1 1005.9,888.2 1008.4,895.0 1010.0,902.0"/>
<polyline points="700.0,800.0 707.8,798.3 715.3,795.8 722.4,792.3 730.0,790.0 736.7,787.0 743.6,784.5 750.5,782.0 757.6,780.0"/>
<polyline points="1229.2,600.0 1231.9,607.1 1235.4,613.8 1239.4,620.2 1242.7,627.0 1244.4,633.9 1247.9,640.2 1249.2,647.3 1251.0,654.2 1253.5,660.8 1256.2,667.4 1262.0,672.2 1268.1,676.6 1273.2,682.2 1279.5,686.4 1284.7,691.9 1290.3,696.9 1296.6,701.1 1304.1,703.6 1311.2,707.3 1318.7,709.6 1326.5,711.3 1333.7,714.6 1341.3,717.4 1348.0,722.0 1355.4,725.2 1363.0,728.0"/>
<polyline points="1165.0,520.0 1166.9,526.9 1169.2,533.6 1172.2,540.1 1175.3,546.6 1177.4,553.4 1180.0,560.0 1185.7,565.4 1189.3,572.5 1194.8,578.2 1200.0,584.0 1205.0,590.0 1213.1,593.2 1220.9,597.3 1229.2,600.0"/>
<polyline points="1150.0,470.0 1153.0,477.3 1155.4,484.9 1157.9,492.4 1160.0,500.0 1162.3,510.0 1165.0,520.0"/>
<polyline points="1171.0,310.0 1167.0,303.8 1162.7,297.8 1160.0,290.9 1155.3,285.1 1151.6,278.8 1147.9,272.4 1144.5,265.9 1140.0,260.0 1136.6,253.6 1132.0,248.0 1128.0,242.0 1124.0,236.0 1120.0,230.0 1114.9,224.1 1110.0,218.0"/>
<polyline points="1171.0,310.0 1173.4,303.0 1177.8,296.9 1180.0,289.7 1183.6,283.3 1187.2,276.8 1190.0,270.0 1193.9,263.2 1198.4,256.7 1202.6,250.1 1207.1,243.6 1210.2,236.3 1215.0,230.0 1219.7,223.7 1225.0,218.0"/>
<polyline points="1171.0,310.0 1178.1,309.1 1185.0,307.2 1192.0,305.8 1199.1,304.7 1206.1,303.6 1213.0,301.3 1220.0,300.0 1227.0,298.0"/>
<polyline points="1171.0,310.0 1176.8,316.0 1182.4,322.2 1188.5,327.9 1194.2,334.0 1200.0,340.0 1206.1,344.4 1212.8,347.8 1219.2,351.8 1226.0,355.0"/>
<polyline points="1171.0,310.0 1163.9,313.3 1156.4,315.6 1148.9,317.8 1141.6,320.9 1134.8,324.9 1127.5,327.8 1120.0,330.0 1113.6,333.2 1106.8,335.4 1100.3,338.2 1093.2,339.7 1086.5,342.0 1080.0,345.0 1070.2,348.1 1060.0,350.0"/>
<polyline points="1000.0,270.0 1005.5,274.5 1011.8,278.1 1016.7,283.4 1022.4,287.8 1028.9,291.0 1033.8,296.4 1040.0,300.0 1045.0,305.0 1049.4,310.6 1054.6,315.4 1060.0,320.0"/>
<polyline points="1100.0,360.0 1103.4,366.6 1106.6,373.3 1110.3,379.9 1113.8,386.4 1117.0,393.2 1120.0,400.0 1124.7,405.5 1127.9,412.1 1132.1,417.9 1136.7,423.5 1140.0,430.0 1141.8,438.1 1144.0,446.0 1146.8,453.8 1147.2,462.2 1150.0,470.0"/>
<polyline points="1245.0,700.0 1248.4,707.1 1253.9,713.0 1257.9,719.8 1262.4,726.2 1265.4,733.6 1270.0,740.0 1277.0,742.7 1283.4,746.5 1289.7,750.7 1296.4,753.8 1303.5,756.3 1310.0,760.0 1317.4,762.2 1325.1,763.0 1332.6,764.6 1340.4,765.0 1348.0,766.4 1355.4,768.9 1363.0,770.0"/>
<polyline points="1300.0,800.0 1306.4,803.4 1311.6,808.7 1317.9,812.2 1323.7,816.5 1330.0,820.0 1338.1,823.1 1346.7,824.3 1354.6,828.1 1363.0,830.0"/>
<polyline points="882.0,407.0 886.7,412.6 890.9,418.6 894.9,424.7 900.0,430.0 903.1,436.4 905.0,443.4 907.9,449.8 910.7,456.4 913.1,463.1 915.0,470.0 917.0,477.0 918.2,484.2 919.6,491.4 920.3,498.7 922.5,505.6 923.6,512.9 925.0,520.0 926.4,527.4 928.1,534.7 928.9,542.2 930.4,549.6 930.3,557.2 931.8,564.6 933.0,572.0"/>
<polyline points="882.0,407.0 879.6,399.6 877.9,392.0 874.1,385.0 872.9,377.2 870.0,370.0 866.7,363.3 863.9,356.4 859.8,350.1 856.7,343.3 853.6,336.5 850.0,330.0 845.8,324.2 842.5,317.7 838.3,311.8 834.2,305.9 830.0,300.0"/>
<polyline points="1050.0,520.0 1055.2,524.8 1060.6,529.4 1065.5,534.5 1070.5,539.5 1074.7,545.3 1080.3,549.7 1085.4,554.6 1090.0,560.0 1094.6,565.4 1099.5,570.5 1104.8,575.2 1110.3,579.7 1115.3,584.7 1120.3,589.7 1125.1,594.9 1130.0,600.0 1133.8,606.2 1137.9,612.3 1140.5,619.2 1144.3,625.4 1148.7,631.3 1152.9,637.3 1155.5,644.2 1160.0,650.0 1163.2,656.9 1166.8,663.6 1169.2,670.9 1172.0,678.0 1175.0,685.0 1178.5,691.8 1181.0,699.0 1184.8,705.6 1187.4,712.8 1190.0,720.0 1192.2,727.0 1194.8,733.8 1196.8,740.8 1198.3,747.9 1200.5,754.9 1201.9,762.0 1203.9,769.0 1205.6,776.1 1207.7,783.1 1210.0,790.0 1211.3,797.2 1214.2,803.9 1216.3,810.9 1217.2,818.2 1220.6,824.8 1221.6,832.1 1223.8,839.1 1226.8,845.8 1227.4,853.2 1230.0,860.0"/>
<polyline points="940.0,520.0 947.1,523.1 954.1,526.1 961.2,529.1 968.8,530.8 975.7,534.3 982.9,537.2 990.0,540.0 996.5,542.7 1003.1,545.0 1010.0,546.8 1016.4,549.6 1023.2,551.4 1029.9,553.7 1036.8,555.1 1043.6,557.0 1050.0,560.0"/>
<polyline points="933.0,572.3 934.0,579.5 935.3,586.7 934.8,594.1 936.1,601.3 937.0,608.5 938.8,616.7 940.7,624.8 943.1,632.7 942.4,640.0 939.5,646.7 938.1,653.8 937.0,661.0 935.9,668.0 934.7,675.0 934.8,682.2 933.0,689.2 931.9,697.3 930.7,705.5 928.9,713.5 926.9,721.5 925.9,728.6 923.5,735.5 921.6,742.4 920.9,749.7 917.5,756.8 913.9,763.8 910.0,770.7 906.8,777.9 900.6,783.8 894.5,789.8 889.2,796.6 882.6,802.1 874.8,808.5 866.5,814.2 859.9,817.2 853.0,819.5 846.3,822.3 839.5,825.0 832.3,826.7 825.0,828.0 818.1,830.3 811.2,832.7 804.8,836.0 797.9,838.4 792.6,843.8 787.2,849.2 781.8,854.5 775.8,860.8 771.4,868.3 765.6,874.7 762.9,881.5 762.4,889.0 759.7,895.9 757.6,902.9"/>
<polyline points="685.0,636.8 692.8,640.3 701.2,642.1 709.2,644.8 716.4,646.9 723.0,650.6 730.5,651.9 737.4,654.9 744.5,654.8 751.5,656.0 758.5,657.2 765.6,656.9 773.7,657.5 781.8,657.0 789.8,657.6 797.9,657.3 806.0,656.9 813.9,659.6 822.1,660.9 830.4,662.2 838.2,665.0 845.5,667.4 852.8,669.8 860.1,671.9 867.5,674.1 874.5,677.1 881.8,678.0 888.9,680.1 896.4,679.8 903.5,682.4 910.8,683.1 918.2,683.7 925.2,686.3 932.5,687.2 939.7,688.7 947.1,689.2 954.2,689.5 961.2,690.0 968.2,691.6 975.3,691.2 983.4,690.0 991.4,689.1 999.5,687.8 1007.6,687.2 1015.5,685.3 1023.8,685.4 1031.7,683.2 1040.0,683.1 1047.9,681.1 1055.2,679.1 1062.7,677.9 1070.0,675.7 1077.5,674.5 1085.0,673.1"/>
<polyline points="721.3,564.2 722.1,571.4 723.8,578.4 725.6,585.4 727.3,592.4 729.1,599.7 732.3,606.6 734.5,613.7 737.4,620.6 736.0,628.7 735.5,636.8 733.9,644.8 733.4,652.9 732.8,660.0 732.2,667.1 729.6,674.0 729.4,681.1 728.4,688.2 727.6,695.3 726.7,702.3 725.3,709.4 724.1,716.6 724.9,723.9 723.8,731.1 724.1,738.4 723.3,745.6 724.7,752.9 726.3,760.1 727.5,767.3 728.7,774.6 729.4,781.9 733.4,790.0 737.9,797.8 741.5,806.1 743.9,813.0 748.0,819.0 751.7,825.2 754.9,831.7 757.6,838.4 760.5,846.4 763.7,854.3 765.6,862.6 765.3,870.7 763.9,878.7 762.5,886.7 762.0,894.8 761.6,902.9"/>
<polyline points="810.0,656.9 808.5,664.2 806.7,671.4 805.4,678.8 803.8,686.0 801.9,693.2 801.3,700.3 799.1,707.2 799.6,714.5 797.9,721.5 798.7,728.5 799.3,735.7 801.4,742.5 801.9,749.7 803.4,757.7 804.1,765.8 805.1,773.9 806.0,781.9 802.4,789.8 799.3,797.8 797.7,806.4 793.9,814.2 790.8,822.1 787.8,830.1 785.8,838.4"/>
<polyline points="838.2,814.2 845.5,815.2 852.8,814.9 860.0,816.4 867.2,818.2 874.5,818.2 882.0,819.4 889.4,820.2 897.0,819.5 904.5,819.8 912.0,820.5 919.4,821.7 926.9,822.3 934.0,823.9 941.2,824.4 948.4,825.2 955.6,826.3 962.8,826.7 969.9,827.7 977.2,827.7 984.2,829.9 991.5,830.3 998.5,830.8 1005.6,830.1 1012.6,829.2 1019.7,828.6 1026.7,828.6 1033.8,829.1 1040.9,828.9 1047.9,828.3 1055.3,827.1 1062.7,827.5 1070.2,827.2 1077.6,826.5 1085.0,826.3"/>
<polyline points="926.9,717.4 935.0,716.0 942.9,713.3 951.1,712.2 959.2,710.9 967.3,709.4 975.3,711.6 983.2,714.1 991.5,715.4 999.5,717.4 1006.7,716.2 1014.1,716.6 1021.3,715.4 1028.5,713.8 1035.8,713.4 1042.8,712.8 1049.9,712.5 1056.9,711.5 1063.9,710.6 1071.0,710.8 1078.0,710.7 1085.0,709.4"/>
<polyline points="685.0,693.2 689.7,698.8 693.3,705.2 697.2,711.3 701.1,717.4 707.6,725.2 713.2,733.5 719.0,739.9 725.3,745.6"/>
<polyline points="838.2,814.2 843.2,808.4 849.6,804.0 854.4,798.1 860.1,793.1 864.8,787.0 870.5,781.9 874.9,774.1 878.5,765.8 878.0,757.6 875.9,749.7 874.5,741.6 868.8,735.2 863.6,728.3 858.4,721.5"/>
<polyline points="685.0,540.0 688.4,546.5 693.6,551.7 697.3,558.0 701.1,564.2 711.2,565.0 721.3,564.2"/>
<polyline points="737.4,654.9 740.5,661.3 742.8,667.9 744.5,674.7 746.0,681.7 748.3,688.3 750.8,694.8 753.5,701.3 757.8,707.4 763.5,712.4 768.5,717.9 772.3,724.4 777.7,729.5 784.1,726.0 791.3,724.4 797.9,721.5"/>
<polyline points="935.0,689.2 940.2,684.3 945.6,679.6 950.7,674.6 955.9,669.7 961.6,665.4 967.3,661.0 973.8,656.6 978.9,650.4 985.9,646.5 991.5,640.8 998.7,638.9 1006.1,638.1 1013.4,636.5 1020.5,634.2 1027.7,632.7 1034.9,631.2 1042.0,629.5 1049.4,628.9 1056.3,626.2 1063.5,624.9 1070.8,624.4 1077.7,621.3 1085.0,620.6"/>
<polyline points="987.4,689.2 987.9,697.3 989.0,705.4 991.3,713.3 991.5,721.5 995.2,728.2 996.8,735.9 1000.9,742.4 1003.5,749.7 1003.8,757.8 1005.9,765.8 1007.0,773.8 1007.6,781.9 1005.8,790.0 1004.8,798.1 1002.4,806.1 1001.5,814.3 999.5,822.3"/>
<polyline points="874.5,677.1 871.2,670.1 870.1,662.4 868.0,655.1 865.1,648.0 862.4,640.8 860.0,632.9 858.7,624.8 857.5,616.6 856.8,608.4 854.4,600.5 855.2,593.4 855.9,586.3 857.3,579.3 858.4,572.3 863.1,566.6 866.0,559.8 870.9,554.4 874.5,548.1"/>
<polyline points="1027.7,717.4 1030.2,725.7 1033.3,733.7 1036.6,741.7 1039.8,749.7 1043.4,756.0 1046.5,762.5 1049.1,769.3 1053.4,775.1 1056.0,781.9 1057.5,788.8 1060.4,795.2 1062.8,801.9 1064.8,808.6 1066.0,815.6 1068.1,822.3"/>
<polyline points="685.0,765.8 692.9,768.7 701.0,770.5 709.0,772.7 717.3,773.9 724.3,775.9 731.0,778.6 737.4,781.9"/>
<polyline points="745.5,866.6 749.9,872.2 755.0,877.3 759.6,882.7 765.7,886.6 771.6,891.0 777.7,894.8 784.7,897.3 791.7,899.5 798.8,901.2 806.0,902.9"/>
<polyline points="749.5,862.6 750.9,870.8 753.9,878.6 755.6,886.8 754.8,894.9 753.5,902.9"/>
<polyline points="846.3,822.3 848.8,830.2 850.8,838.3 852.8,846.3 854.4,854.5 855.7,861.8 858.3,868.7 860.7,875.6 862.4,882.7 865.7,889.9 870.5,896.2 874.5,902.9"/>
<polyline points="910.8,846.5 917.0,850.2 923.6,853.2 929.8,856.9 936.9,858.7 943.1,862.6 949.2,867.9 955.6,872.7 962.0,877.7 969.4,881.3 975.3,886.8 981.2,891.7 986.5,897.1 991.5,902.9"/>
<polyline points="1052.6,218.0 1058.3,222.5 1063.7,227.3 1070.1,230.8 1075.7,235.4 1080.2,241.1 1084.8,246.7 1088.4,253.0 1093.1,258.5 1099.4,263.8 1104.6,270.2 1110.5,275.9 1118.4,280.3 1126.0,285.3 1133.6,290.3 1141.6,294.7 1149.3,299.6 1156.8,304.8 1163.9,308.0 1171.2,310.6"/>
<polyline points="960.0,267.2 967.8,267.3 975.5,268.8 983.1,270.1 992.0,271.5 1000.6,273.6 1009.2,275.9 1015.6,281.1 1022.6,285.6 1029.4,290.3 1036.3,293.3 1042.6,297.4 1048.9,301.3 1055.5,304.8 1062.4,307.8 1068.8,311.5 1074.8,316.0 1081.5,319.3 1090.4,324.7 1098.9,330.8"/>
<polyline points="1162.5,218.0 1163.2,225.4 1165.8,232.4 1166.8,239.7 1168.3,246.9 1169.2,254.2 1169.1,261.5 1169.6,268.7 1171.2,275.9 1171.8,284.6 1170.8,293.2 1171.8,301.9 1171.2,310.6 1171.2,317.9 1172.8,325.0 1172.8,332.4 1174.1,339.5 1174.9,346.9 1177.1,354.0 1179.1,361.1 1179.9,368.5 1177.9,376.2 1175.8,383.8 1174.1,391.6 1172.9,399.5 1170.0,407.0 1168.3,414.8 1167.2,421.7 1166.6,428.8 1165.2,435.7 1163.7,442.5 1162.5,449.5 1162.5,457.1 1161.1,464.7 1159.8,472.2 1159.7,479.9"/>
<polyline points="1171.2,310.6 1177.7,306.3 1184.4,302.3 1191.5,299.0 1197.8,295.1 1203.0,289.7 1208.3,284.5 1215.1,281.1 1220.4,275.9 1230.0,267.2"/>
<polyline points="1171.2,310.6 1178.4,313.7 1185.5,316.9 1193.2,318.7 1200.2,322.2 1207.7,323.1 1215.1,324.9 1222.4,327.1 1230.0,328.0"/>
<polyline points="1171.2,310.6 1165.8,316.8 1160.0,322.5 1154.0,328.1 1148.1,333.7 1143.4,339.7 1139.0,345.7 1133.6,351.1 1129.4,357.7 1125.3,364.3 1122.0,371.4 1120.0,378.1 1117.7,384.7 1116.2,391.6 1114.2,398.7 1114.0,406.2 1111.7,413.3 1110.5,420.5 1106.6,427.7 1103.5,435.2 1099.7,442.3 1096.0,449.5"/>
<polyline points="960.0,223.8 967.3,226.6 974.4,229.8 981.7,232.4 988.9,235.4 996.4,236.7 1003.3,239.9 1010.6,241.9 1017.9,244.0 1025.0,246.0 1032.2,247.4 1039.6,248.3 1046.8,249.8 1054.1,254.1 1061.6,257.9 1068.9,262.3 1075.7,267.2"/>
<polyline points="1096.0,218.0 1098.9,225.0 1100.4,232.4 1102.5,239.7 1104.7,246.9 1109.3,252.9 1114.9,258.0 1119.1,264.3 1125.4,269.1 1132.2,273.0 1139.1,276.6 1145.2,281.7 1150.6,287.3 1155.0,293.8 1161.3,298.6 1165.5,305.2 1171.2,310.6"/>
<polyline points="1133.6,218.0 1137.1,225.9 1140.8,233.7 1145.2,241.1 1148.3,249.3 1152.9,256.6 1156.8,264.3 1158.5,272.2 1162.2,279.5 1163.5,287.6 1165.7,295.4 1169.6,302.6 1171.2,310.6"/>
<polyline points="1171.2,310.6 1174.9,316.6 1179.8,321.8 1182.8,328.4 1187.8,333.5 1191.5,339.5 1196.8,346.9 1201.1,355.0 1205.9,362.7 1214.1,364.1 1222.1,366.1 1230.0,368.5"/>
<polyline points="1171.2,310.6 1173.8,303.5 1176.2,296.4 1179.4,289.5 1182.2,282.6 1185.7,275.9 1188.9,268.8 1192.1,261.7 1193.8,253.9 1197.3,246.9 1199.5,239.4 1203.1,232.5 1206.2,225.3 1208.8,218.0"/>
<polyline points="1122.0,371.4 1130.4,376.3 1139.4,380.0 1147.0,384.0 1154.5,388.4 1162.5,391.6 1174.1,391.6"/>
<polyline points="1081.5,397.4 1089.2,399.6 1097.0,401.1 1104.7,403.2 1113.5,405.7 1122.0,409.0"/>
<polyline points="1162.5,449.5 1155.4,446.5 1148.0,443.9 1141.0,440.4 1133.6,437.9 1126.3,437.0 1119.2,434.6 1111.8,434.4 1104.7,432.1 1097.1,434.5 1089.2,435.7 1081.5,437.9"/>
<polyline points="727.0,580.0 727.0,593.3 734.7,604.3 736.6,614.2 738.0,624.2 740.6,631.2 741.1,638.6 742.9,645.8 744.7,652.9 737.9,656.0 731.4,659.6 729.8,667.2 729.3,675.0 729.4,682.8 728.1,690.5 728.4,698.8 726.9,707.1 726.6,715.4 725.9,723.6 726.3,731.1 724.6,738.4 724.8,745.7 725.5,754.3 725.6,762.9 727.9,771.4 728.1,780.0"/>
<polyline points="685.0,639.7 693.9,638.2 702.7,636.4 713.7,644.1 722.4,647.9 731.4,650.7 739.2,652.6 746.9,655.1 756.6,652.1 766.8,650.7 780.0,650.7 791.1,657.3 800.1,658.7 808.8,661.8 817.6,662.2 826.4,661.7 835.3,661.8 842.7,664.6 850.2,667.2 857.4,670.6 864.4,672.6 871.5,674.8 878.2,677.8 885.0,680.6"/>
<polyline points="808.8,606.5 807.3,615.3 806.5,624.2 807.8,631.5 810.3,638.5 811.4,645.8 813.2,652.9 807.7,664.0 806.9,671.3 806.6,678.8 805.4,686.1 800.8,694.6 797.7,703.8 798.1,712.7 799.9,721.4 798.9,730.3 797.4,739.2 795.5,748.0 796.4,756.1 798.4,764.1 800.8,771.9 802.1,780.0"/>
<polyline points="685.0,692.7 693.8,699.3 696.5,706.9 698.3,714.8 703.2,721.6 708.3,728.3 713.7,734.7 718.7,740.3 724.8,744.6"/>
<polyline points="848.5,580.0 848.7,587.4 849.7,594.8 850.7,602.1 853.1,609.2 854.8,616.6 857.3,623.7 859.6,630.8 863.0,638.8 865.3,647.1 868.4,655.1"/>
<polyline points="724.8,744.6 731.7,742.3 737.8,738.0 744.3,734.8 751.3,732.5 758.6,733.6 766.0,732.9 773.4,732.9 780.8,733.1 788.2,733.5 795.5,734.7 802.9,734.9 810.2,735.1 817.6,734.7 825.1,735.4 832.3,737.8 839.7,739.1 847.3,738.6 854.9,737.5 862.5,736.5 869.8,733.9 877.5,734.2 885.0,732.5"/>
<polyline points="685.0,593.3 698.3,597.7 701.2,606.3 702.7,615.4 705.6,625.2 707.1,635.2"/>
<polyline points="749.1,655.1 749.2,663.3 750.0,671.4 751.3,679.4 755.2,687.8 759.9,695.8 764.6,703.8 765.8,711.4 766.4,719.2 765.8,727.0 766.8,734.7 765.6,742.3 764.0,749.8 763.2,757.5 761.3,765.0 759.8,772.5 757.9,780.0"/>
<polyline points="813.2,602.1 820.9,601.9 828.6,602.1 839.1,602.9 849.6,602.1"/>
<polyline points="931.4,580.0 931.9,587.2 932.6,594.3 931.4,601.6 932.5,608.7 936.1,615.6 941.2,621.6 944.7,628.6 943.2,637.7 940.2,646.3 938.6,653.7 937.4,661.2 934.7,668.4 935.8,677.2 935.8,686.1 933.8,693.7 932.6,701.6 930.2,709.1 929.2,717.0 924.9,724.1 921.7,731.7 918.1,739.1 915.3,745.7 914.3,752.9 911.1,759.4 909.6,766.5 906.6,773.0 904.9,780.0"/>
<polyline points="885.0,680.6 892.2,681.9 899.6,681.5 906.8,682.7 914.0,684.1 921.2,685.3 928.5,685.7 935.8,686.1 944.6,688.1 953.7,689.1 962.3,691.6 971.3,691.0 979.9,688.7 988.9,688.3 997.2,688.0 1005.4,686.7 1013.7,686.1 1022.0,686.1 1029.8,685.6 1037.5,684.0 1045.1,682.1 1053.0,681.7 1061.8,672.8 1071.6,675.6 1081.7,677.2"/>
<polyline points="929.2,717.0 936.4,717.4 943.6,717.2 950.7,718.2 957.9,718.1 964.2,712.6 971.2,708.2 978.3,710.5 985.5,712.9 992.6,715.3 999.9,717.0 1007.3,717.8 1014.3,720.1 1021.6,721.4 1028.6,723.6 1033.6,731.8 1039.7,739.1 1046.8,742.8 1053.3,747.5 1059.3,752.9 1066.2,756.8 1072.6,761.1 1078.8,765.6 1085.0,770.1"/>
<polyline points="932.5,608.7 925.3,611.1 918.6,614.8 911.5,617.6 902.7,617.4 893.8,618.3 885.0,617.6"/>
<polyline points="932.5,608.7 939.8,608.7 947.1,610.3 954.4,610.2 961.7,609.7 969.0,610.9 976.3,608.5 983.7,606.5 991.1,604.3 1000.0,606.3 1008.8,608.7 1016.5,611.6 1023.4,616.2 1030.9,619.8 1039.6,617.5 1048.5,616.8 1057.4,615.4 1064.1,612.9 1071.0,611.4 1078.2,610.7 1085.0,608.7"/>
<polyline points="999.9,717.0 1001.1,724.3 1001.4,731.7 1002.1,739.1 1006.4,746.9 1011.0,754.6 1009.4,763.0 1008.6,771.5 1008.8,780.0"/>
<polyline points="988.9,688.3 993.4,682.8 998.1,677.5 1002.7,672.1 1006.5,666.2 1013.8,668.6 1021.2,670.8 1028.6,672.8"/>
<polyline points="1004.3,580.0 1006.5,593.3 1004.9,600.9 1004.3,608.7"/>
<polyline points="969.0,708.2 971.9,700.7 973.4,692.7"/>
<polyline points="1035.3,736.9 1044.1,735.1 1053.0,734.4 1061.8,732.5 1069.5,731.8 1077.3,731.3 1085.0,730.3"/>
<polyline points="885.0,717.0 898.3,712.6 906.0,711.3 913.7,710.4 921.6,713.4 929.2,717.0"/>
<polyline points="1176.6,328.8 1184.6,328.6 1192.6,328.3 1200.6,328.6 1208.5,327.1 1216.4,325.7 1224.3,325.0 1232.3,325.9 1240.2,324.6 1247.8,322.2 1254.4,317.7 1261.9,314.8 1269.6,312.9 1276.4,308.6 1284.2,306.9 1292.2,307.7 1300.0,309.4"/>
<polyline points="1171.5,319.1 1179.2,321.3 1187.2,321.2 1195.0,319.2 1202.3,316.0 1208.1,310.5 1213.9,304.9"/>
<polyline points="1166.3,336.4 1173.1,340.7 1179.8,345.0 1186.0,350.1 1192.4,354.9 1199.4,358.7 1204.7,364.7 1207.6,372.2 1208.8,380.1 1208.7,388.1 1209.7,396.0 1212.1,403.6 1215.7,410.8"/>
<polyline points="1162.9,333.3 1168.0,339.5 1173.5,345.2 1177.0,352.5 1178.6,360.3 1182.8,367.1 1188.3,372.9 1192.0,380.0 1195.7,387.1 1197.0,395.0 1198.8,402.8"/>
<polyline points="1159.8,327.7 1165.8,333.0 1173.1,336.3 1180.7,338.8 1187.1,343.5 1192.6,349.4 1199.4,353.6 1206.9,356.5 1214.8,357.3 1222.6,355.6 1230.6,355.5 1238.4,353.7 1246.3,352.2 1254.1,350.4 1261.3,347.0 1269.0,344.8"/>
<polyline points="1155.7,324.5 1159.5,331.5 1164.6,337.7 1170.7,342.9 1174.7,349.9 1177.1,357.5 1180.6,364.7 1182.0,372.6"/>
<polyline points="1158.7,317.2 1159.3,325.2 1162.1,332.7 1162.2,340.7 1164.0,348.5 1167.0,355.9 1168.5,363.7 1171.0,371.3 1174.6,378.5 1180.1,384.3 1187.0,388.3 1193.6,392.8 1201.0,395.9 1208.1,399.6 1215.5,402.6 1223.0,405.4"/>
<polyline points="1155.0,312.0 1151.3,319.1 1149.4,326.9 1149.3,334.9 1147.0,342.5 1143.1,349.5 1140.5,357.0 1139.5,365.0 1137.2,372.6 1132.7,379.3 1129.7,386.7 1124.6,392.8 1118.0,397.3"/>
<polyline points="1156.6,309.3 1156.2,317.3 1153.2,324.7 1151.6,332.6 1148.9,340.1 1147.5,348.0 1144.4,355.3 1140.7,362.5"/>
<polyline points="1163.3,308.5 1161.2,316.3 1160.7,324.2 1159.8,332.2 1157.0,339.7 1153.6,346.9 1151.3,354.6 1146.9,361.3 1144.0,368.8 1143.8,376.8 1144.8,384.7 1146.2,392.6 1149.8,399.7 1155.0,405.8 1160.7,411.4"/>
<polyline points="1165.3,306.9 1158.1,310.3 1150.1,311.1 1142.1,311.0 1134.2,309.8 1126.4,308.2 1118.4,308.6 1110.9,311.6 1104.9,316.8 1097.6,320.1 1089.9,322.3"/>
<polyline points="1168.7,307.4 1161.3,310.5 1153.6,312.5 1146.1,315.3 1138.1,315.5 1130.5,318.0 1122.8,320.2 1114.9,321.2 1107.0,319.9 1099.4,317.3 1092.3,313.7 1086.0,308.7 1081.5,302.1 1076.3,296.0"/>
<polyline points="1158.9,286.6 1151.2,288.7 1143.2,289.2 1135.4,287.6 1127.6,285.7 1120.1,283.0 1112.3,281.1 1104.7,278.6 1097.3,275.6 1089.3,274.9 1081.5,273.4 1074.6,269.3 1069.0,263.6 1064.4,257.0 1059.3,250.8 1055.3,243.9 1051.7,236.8"/>
<polyline points="1164.3,286.2 1156.4,284.9 1148.5,286.2 1140.6,287.0 1132.6,287.9 1125.0,290.2 1117.1,291.5 1109.2,292.8"/>
<polyline points="1171.3,283.1 1163.3,283.7 1155.5,285.4 1147.6,286.1 1139.9,288.5 1133.0,292.6 1125.3,294.5 1117.4,295.6 1109.5,297.0 1101.5,296.2"/>
<polyline points="1175.3,290.0 1167.9,286.9 1161.4,282.3 1156.4,276.0 1153.3,268.6 1149.6,261.5 1146.3,254.2 1142.1,247.4 1136.4,241.9"/>
<polyline points="1182.8,287.8 1177.6,281.7 1174.6,274.3 1170.5,267.4 1165.0,261.7 1159.2,256.2 1152.6,251.6 1145.3,248.4 1137.7,245.7 1130.5,242.3 1123.2,239.0 1115.6,236.6 1108.7,232.5 1103.6,226.4 1098.3,220.4 1091.4,216.2"/>
<polyline points="1186.6,289.0 1182.4,282.2 1178.6,275.2 1173.8,268.7 1170.5,261.5 1164.9,255.7 1158.1,251.6"/>
<polyline points="1175.2,308.2 1171.0,301.4 1165.2,295.9 1158.0,292.4 1151.1,288.3 1144.1,284.5 1137.5,280.0 1131.4,274.9 1126.5,268.6 1123.8,261.0 1122.2,253.2 1119.0,245.9 1115.6,238.6 1110.7,232.3 1104.0,228.0 1097.1,223.8"/>
<polyline points="1179.6,308.0 1178.2,300.2 1177.8,292.2 1177.5,284.2 1177.9,276.2 1179.7,268.4 1180.9,260.5 1183.7,253.0 1188.4,246.6 1191.2,239.1"/>
<polyline points="1194.2,309.6 1195.6,301.7 1197.7,294.0 1201.9,287.1 1205.5,280.0 1209.4,273.0 1215.0,267.3 1221.7,262.9"/>
<polyline points="1187.3,313.9 1189.2,306.1 1192.4,298.8 1197.0,292.3 1202.3,286.3 1208.4,281.1 1213.4,274.9 1220.0,270.2 1227.6,268.0 1235.6,268.5 1243.6,269.1 1251.3,271.3 1259.2,272.6 1266.4,276.0"/>
<polyline points="1183.5,316.1 1188.2,309.7 1193.2,303.4 1199.3,298.2 1205.3,292.9 1209.2,285.9 1214.6,280.0 1217.9,272.7"/>
<polyline points="1178.3,316.0 1185.5,312.5 1191.5,307.2 1196.1,300.7 1200.8,294.2 1206.4,288.5 1213.2,284.2 1220.5,281.0 1228.4,280.1 1236.4,279.2 1244.2,280.7"/>
<polyline points="1178.7,317.5 1184.8,312.3 1191.6,308.1 1198.8,304.6 1206.0,301.2 1213.9,299.6 1221.8,298.3 1229.4,296.1 1236.9,293.2 1244.8,292.1 1252.7,293.3 1260.7,292.9 1268.6,294.4"/>
<polyline points="1178.7,327.1 1186.2,324.3 1193.7,321.7 1201.3,319.1 1209.0,317.1 1215.7,312.7 1223.4,310.6 1231.2,308.7 1238.8,306.2 1246.7,305.3 1254.7,304.8 1262.7,304.3 1270.7,304.8"/>
<polyline points="1187.2,311.0 1189.4,313.5 1188.0,315.8 1189.2,319.2 1187.0,321.4 1182.3,321.3 1180.4,323.4 1177.0,323.0 1174.6,324.9 1171.5,326.8 1168.0,326.9 1165.4,324.4 1163.0,322.8 1161.0,321.0 1157.2,320.6 1153.9,319.1 1156.5,315.4 1152.3,313.7 1156.1,311.0 1155.4,308.7 1156.0,306.5 1155.0,303.4 1158.4,302.2 1160.4,300.4 1162.2,298.1 1166.1,299.1 1168.2,295.8 1171.5,298.2 1174.6,296.8 1177.2,298.5 1179.7,299.7 1183.2,299.9 1185.0,301.9 1186.5,304.1 1188.0,306.2 1189.4,308.5 1187.7,311.0"/>
<polyline points="1208.0,311.0 1212.4,316.8 1210.6,322.4 1206.4,327.1 1205.4,333.7 1198.1,336.3 1193.6,341.7 1184.1,338.7 1178.9,344.8 1171.5,346.0 1163.7,346.3 1158.6,339.4 1152.6,337.2 1142.5,338.6 1143.4,329.8 1131.7,329.4 1129.5,323.2 1136.4,315.9 1134.6,311.0 1129.4,305.1 1136.6,300.8 1141.0,296.9 1137.8,288.4 1146.4,287.1 1149.8,280.9 1159.4,284.3 1164.8,280.4 1171.5,277.2 1177.4,284.0 1184.0,283.6 1192.6,281.8 1200.4,283.5 1206.4,287.5 1202.1,296.8 1209.2,300.0 1213.9,305.0 1211.5,311.0"/>
<polyline points="1245.4,311.0 1234.0,319.8 1228.8,327.7 1225.0,335.7 1217.7,342.0 1217.2,354.6 1206.7,359.7 1195.9,364.7 1182.4,360.3 1171.5,361.7 1160.4,361.3 1145.1,369.0 1131.4,366.6 1120.7,359.4 1124.4,342.6 1118.8,335.3 1096.8,332.7 1103.3,320.6 1095.9,311.0 1106.1,301.8 1106.4,292.0 1110.6,282.9 1119.0,275.8 1125.1,266.8 1141.6,269.6 1146.1,255.2 1158.1,250.2 1171.5,260.4 1183.5,256.6 1197.2,254.6 1205.5,263.9 1212.4,272.0 1219.7,278.6 1232.4,282.9 1227.7,294.6 1248.6,300.1 1247.8,311.0"/>
<polyline points="1292.9,873.7 1300.7,869.1 1309.5,867.2 1317.2,862.5 1325.6,859.5 1334.3,856.9 1343.3,856.8 1352.0,854.5 1360.9,853.4 1369.7,855.1 1378.3,857.8 1387.3,858.1 1395.8,861.0 1402.9,866.5 1411.3,869.9"/>
<polyline points="1341.8,623.8 1348.8,629.4 1353.8,636.8 1358.1,644.8 1362.3,652.7 1367.7,659.9 1372.7,667.4"/>
<polyline points="1362.1,794.0 1370.0,789.8 1378.4,786.5 1387.1,784.2 1396.0,783.0 1404.3,779.5 1413.2,778.0 1422.1,776.4 1431.1,776.4 1439.7,778.8"/>
<polyline points="1272.0,878.0 1265.8,871.4 1259.9,864.6 1254.4,857.5 1250.4,849.4 1247.3,841.0 1242.1,833.6 1238.6,825.3 1234.2,817.5 1230.4,809.3 1226.6,801.2 1225.2,792.3 1223.3,783.5"/>
<polyline points="1345.0,624.5 1339.1,631.4 1334.7,639.2 1328.8,646.0 1321.6,651.4 1316.0,658.4 1312.3,666.6"/>
<polyline points="1311.7,892.7 1306.1,885.7 1299.1,880.0 1291.0,876.1 1283.4,871.3 1276.4,865.6 1269.8,859.5 1265.1,851.8 1258.9,845.3 1251.0,840.9 1243.7,835.7 1235.2,832.7 1226.9,829.2"/>
<polyline points="1339.4,851.2 1339.6,842.2 1338.9,833.2 1336.4,824.6 1333.9,815.9 1334.4,806.9 1336.6,798.2 1336.3,789.2"/>
<polyline points="1270.5,710.9 1275.9,703.7 1281.7,696.8 1288.7,691.2 1295.0,684.8 1301.7,678.7 1309.9,675.1 1316.8,669.3 1322.0,662.0 1328.9,656.2 1333.8,648.6 1338.0,640.7 1339.3,631.8 1337.8,622.9"/>
<polyline points="1086.1,807.9 1093.8,803.4 1101.5,798.7 1110.0,795.6 1118.0,791.6 1124.6,785.4 1130.8,778.9 1137.0,772.4 1144.3,767.2 1151.3,761.5 1158.9,756.7 1166.1,751.3"/>
<polyline points="1065.8,809.2 1070.0,801.2 1076.1,794.5 1083.3,789.1 1091.1,784.8 1097.5,778.4 1104.9,773.2 1113.0,769.5"/>
<polyline points="1040.3,896.0 1048.6,892.5 1055.7,887.0 1061.9,880.5 1068.3,874.1 1075.1,868.2 1083.0,863.9 1091.1,860.0 1099.5,856.8"/>
<polyline points="1012.9,864.3 1017.3,872.1 1022.7,879.3 1029.6,885.1 1038.0,888.2 1046.8,890.3 1055.8,891.2 1064.6,889.4 1073.4,887.6 1082.0,884.8 1091.0,884.7"/>
<polyline points="1077.3,863.2 1080.7,854.8 1081.1,845.8 1082.2,836.9 1085.8,828.6 1088.5,820.1 1093.5,812.6 1100.1,806.4 1107.1,800.8 1115.2,796.8 1123.4,793.0"/>
<polyline points="952.6,894.0 954.2,902.8 952.7,911.7 948.4,919.6 946.2,928.3 942.6,936.6 937.6,944.1 931.5,950.7 926.1,957.9 920.6,965.0"/>
<polyline points="790.0,288.3 797.4,293.4 804.5,299.0 810.5,305.6 818.3,310.1 827.0,312.5 836.0,312.9 844.6,315.6 853.5,316.9"/>
<polyline points="711.4,235.2 718.2,229.3 725.3,223.8 733.3,219.6 741.1,215.2 749.6,212.1 758.3,209.7 767.3,209.5"/>
<polyline points="819.6,292.3 822.4,283.8 822.4,274.8 823.3,265.8 822.2,256.9 821.9,247.9 818.7,239.4 815.3,231.1"/>
<polyline points="757.4,272.9 762.6,280.2 765.5,288.7 766.3,297.7 767.4,306.6 770.2,315.2"/>
</g>
<g fill="none" stroke="#b5d8e0" stroke-width="1.1" stroke-linejoin="round">
<polyline points="977.4,218.0 982.0,225.8 986.7,233.6 991.8,241.1 996.8,248.3 1000.5,256.1 1003.4,264.3 1009.8,268.9 1016.5,272.8 1022.9,277.3 1029.4,281.7 1036.4,284.5 1042.8,288.3 1048.8,292.8 1055.5,296.1 1062.6,298.7 1068.7,303.1 1075.5,306.1 1081.5,310.6 1089.1,314.4 1095.9,319.4 1103.1,323.8 1110.5,328.0 1122.0,333.7"/>
<polyline points="685.0,693.2 691.1,701.3 697.1,709.4 698.1,719.6 701.1,729.5 704.6,735.9 707.4,742.6 709.2,749.7"/>
</g>
<g fill="none" stroke="#dcc3cc" stroke-width="1.4" stroke-linejoin="round">
<polyline points="724.8,257.8 735.8,268.8 757.9,275.5 777.8,268.8 795.5,260.0 802.1,251.1 808.8,266.6"/>
<polyline points="685.0,357.2 698.3,361.6 711.5,368.3 724.8,372.7"/>
<polyline points="944.0,868.0 984.6,847.5 1033.7,849.4 1101.1,856.2 1134.8,849.4"/>
</g>
<g fill="none" stroke="#e2cbd4" stroke-width="1.3" stroke-dasharray="1.4 2.2" stroke-linecap="round">
<polyline points="738.0,613.1 747.9,609.5 757.9,606.5 764.5,603.4 771.1,600.5 777.8,597.7 784.3,590.9 791.1,584.4"/>
<polyline points="685.0,661.8 692.4,662.2 699.8,662.7 707.1,664.0 709.3,672.8 715.8,676.5 722.6,679.4 731.4,679.9 740.2,679.4 749.1,679.4 757.9,679.4 764.8,685.8 771.2,692.7 770.0,702.6 769.0,712.6 762.2,717.9 755.7,723.6 746.9,723.7 738.0,723.1 729.2,723.6 723.6,717.4 718.8,710.4 713.7,703.8 716.2,693.9 718.1,683.9"/>
<polyline points="786.7,615.4 793.1,620.1 799.9,624.2 799.6,631.6 800.0,638.9 799.9,646.3 794.2,652.8 788.9,659.6 786.7,668.4 784.4,677.2 779.3,682.4 774.0,687.4 769.0,692.7"/>
<polyline points="808.8,633.0 817.5,634.6 826.4,635.2 835.4,638.3 844.1,641.9 848.5,648.6 853.0,655.1 866.2,650.7 875.6,650.2 885.0,650.7"/>
<polyline points="835.3,668.4 830.9,677.3 826.4,686.1 823.8,694.8 822.0,703.8 820.3,712.5 819.8,721.4 820.8,730.3 822.0,739.1 821.7,747.3 820.0,755.4 819.2,763.6 818.7,771.8 817.6,780.0"/>
<polyline points="685.0,734.7 691.9,730.7 698.3,725.9 702.8,718.6 706.9,711.0 711.5,703.8 715.3,694.0 718.1,683.9"/>
<polyline points="729.2,723.6 742.5,725.9 750.2,726.1 757.9,725.8 765.7,725.4 773.4,725.9 776.9,732.4 780.0,739.1 780.1,748.0 780.0,756.8 773.4,767.8 786.7,765.6 794.1,766.7 801.5,768.2 808.8,770.1 815.4,775.1 822.0,780.0"/>
<polyline points="872.8,580.0 881.7,588.8 883.1,597.6 883.9,606.5 879.4,612.4 875.3,618.5 870.6,624.2 868.4,633.0 876.9,637.2 885.0,641.9"/>
<polyline points="713.7,580.0 715.7,587.3 716.7,594.7 718.1,602.1 716.4,611.1 713.8,619.8 711.5,628.6 716.0,634.1 720.4,639.7 714.8,646.3 709.3,652.9"/>
<polyline points="685.0,750.2 698.3,748.0 705.1,752.0 711.5,756.8 718.0,762.5 724.8,767.8 729.2,780.0"/>
<polyline points="885.0,586.6 898.3,588.8 900.5,598.8 902.7,608.7 907.4,616.3 911.5,624.2 911.5,637.5 919.3,637.0 927.0,637.5 932.2,642.2 938.0,646.3 944.7,649.6 951.3,652.9 962.3,646.3 970.1,645.9 977.8,646.3 983.2,641.7 988.9,637.5 995.5,630.8 1002.1,635.3 1008.8,639.7 1013.3,645.4 1017.2,651.8 1022.0,657.3 1028.4,653.6 1035.3,650.7 1044.1,650.7 1053.0,651.3 1061.8,650.7 1069.5,652.5 1077.3,653.6 1085.0,655.1"/>
<polyline points="969.0,613.1 969.0,619.8 978.9,623.1 988.9,626.4 995.5,630.8"/>
<polyline points="980.0,580.0 977.8,593.3 971.2,602.1 969.0,613.1"/>
<polyline points="1030.9,580.0 1031.1,587.2 1030.6,594.4 1031.2,601.5 1030.9,608.7 1039.7,608.4 1048.5,608.9 1057.4,608.7 1057.9,617.6 1059.2,626.4 1059.6,635.2 1053.0,644.1"/>
<polyline points="962.3,652.9 962.2,662.9 962.3,672.8 956.5,679.2 951.3,686.1 940.2,688.3 939.9,696.4 939.1,704.5 938.0,712.6 939.8,720.1 942.3,727.4 944.7,734.7 946.1,744.6 946.9,754.6 954.2,757.1 961.6,759.2 969.0,761.2 977.8,763.6 986.7,765.4 995.5,767.8 1002.9,767.7 1010.2,767.3 1017.6,767.8"/>
<polyline points="986.7,703.8 986.9,711.5 986.7,719.2 986.5,727.0 986.7,734.7 980.1,742.5 973.4,750.2 969.0,761.2"/>
<polyline points="1004.3,690.5 1006.5,701.5 999.9,708.2"/>
<polyline points="1039.7,672.8 1044.6,680.3 1048.5,688.3 1053.0,694.9 1066.2,697.1 1072.7,700.4 1078.9,704.1 1085.0,708.2"/>
<polyline points="1030.9,686.1 1032.8,695.0 1035.3,703.8 1032.0,710.2 1029.5,717.1 1026.4,723.6 1030.9,734.7"/>
<polyline points="1053.0,694.9 1046.3,699.3 1039.7,703.8 1035.3,717.0"/>
<polyline points="885.0,650.7 898.3,652.9 900.9,659.7 904.4,666.1 907.1,672.8 903.5,681.5 900.5,690.5 896.2,697.3 891.6,703.8"/>
<polyline points="885.0,734.7 898.3,739.1 904.9,742.4 911.5,745.7 919.3,745.8 927.0,745.7 933.4,742.0 940.2,739.1"/>
<polyline points="1066.2,712.6 1075.1,717.0 1085.0,721.4"/>
<polyline points="1061.8,734.7 1060.7,742.0 1060.5,749.4 1059.6,756.8 1064.3,762.1 1068.4,767.8"/>
<polyline points="1155.6,435.9 1151.5,430.2 1145.0,427.6 1138.9,424.1 1132.2,422.3 1126.9,417.7 1120.3,415.5 1113.7,418.0 1106.7,417.5 1100.7,421.1 1093.9,419.5 1087.6,422.3 1082.3,427.0"/>
<polyline points="1116.6,315.6 1110.9,319.6 1104.0,320.9 1100.0,326.7 1097.9,333.4 1096.1,340.1 1100.2,345.8 1105.6,350.3 1109.7,355.9"/>
<polyline points="1136.6,281.9 1142.3,277.7 1148.8,275.3 1155.7,273.7 1162.6,272.5 1169.1,270.0 1175.1,273.6 1180.0,278.6 1182.9,285.0 1182.5,292.0 1177.0,296.2"/>
<polyline points="995.4,375.8 994.2,368.9 993.0,362.0 995.1,355.3 998.9,349.4 996.8,342.7 992.1,337.6 985.7,334.7 978.8,333.7 971.9,332.3 965.0,331.8"/>
<polyline points="1112.4,432.4 1115.0,438.8 1121.4,441.7 1127.2,445.6 1130.6,451.7 1137.4,453.4 1141.1,459.4 1147.5,462.2 1154.1,464.6 1160.9,462.9 1167.6,461.2 1174.6,460.9 1179.3,455.6 1186.3,455.3"/>
<polyline points="1088.9,354.1 1083.4,349.7 1077.8,345.5 1070.9,344.0 1067.1,338.1 1065.2,331.4 1066.4,324.5 1062.0,319.0 1060.6,312.2 1060.3,305.2 1061.7,298.3 1062.0,291.3"/>
<polyline points="1150.8,237.9 1153.5,244.4 1150.3,250.6 1143.6,252.6 1140.2,258.7 1133.6,261.0 1127.3,264.1 1121.1,267.4 1114.6,264.9 1107.6,265.7 1100.6,266.1 1095.4,261.5 1092.3,255.2"/>
<polyline points="1100.1,464.8 1097.4,458.3 1093.8,452.3 1087.2,450.0 1083.4,444.1 1078.2,439.4 1071.3,438.6 1064.3,439.5"/>
<polyline points="1022.8,327.2 1016.4,324.5 1011.6,319.3 1010.4,312.4 1005.3,307.7 998.7,305.2 992.1,307.3 985.4,309.6 978.8,311.9 973.4,316.3 967.9,320.6 960.9,320.8 954.5,323.9"/>
<polyline points="1133.3,402.6 1132.7,395.7 1135.3,389.2 1134.0,382.3 1129.9,376.6 1131.5,369.8 1137.3,365.9 1144.2,366.5 1149.4,361.8 1149.7,354.8"/>
<polyline points="1053.7,329.2 1046.9,327.3 1040.0,328.1 1033.4,325.8 1030.1,319.6 1023.8,316.5 1016.8,316.5 1012.3,311.2"/>
<polyline points="1103.7,311.8 1097.9,315.6 1090.9,315.3 1085.7,320.0 1084.6,326.9 1080.0,332.2 1074.4,336.4 1067.5,337.5 1062.0,341.8 1057.2,346.9 1054.9,353.5 1049.5,357.9 1045.2,363.5 1039.6,367.7"/>
<polyline points="1222.5,304.7 1215.6,303.5 1208.6,303.9 1203.6,308.9 1196.7,309.6 1192.2,315.0 1192.5,322.0 1192.0,329.0 1191.7,336.0"/>
<polyline points="1151.1,298.2 1149.8,291.3 1153.5,285.4 1158.2,280.3 1164.5,277.0 1170.7,273.8 1177.7,273.7 1184.3,271.5"/>
<polyline points="1353.0,882.5 1353.9,875.6 1352.6,868.7 1350.0,862.2 1346.0,856.5 1344.3,849.7 1340.2,844.0 1333.3,842.7"/>
<polyline points="1312.5,866.6 1318.5,870.2 1324.4,873.9 1328.6,879.5 1333.9,884.1 1340.9,884.1 1347.2,887.1 1353.0,891.1 1357.6,896.3 1361.1,902.4 1359.6,909.2 1359.5,916.2 1356.7,922.6 1355.2,929.4"/>
<polyline points="1306.1,784.6 1300.6,788.9 1297.9,795.4 1295.4,801.9 1290.2,806.6 1284.0,809.7 1280.2,815.6 1274.1,819.1"/>
<polyline points="1301.0,788.9 1295.0,792.6 1289.4,796.9 1283.5,800.5 1276.6,799.5 1269.7,800.8 1262.7,801.2 1257.3,805.6"/>
<polyline points="1349.7,744.3 1355.6,740.5 1359.5,734.7 1359.3,727.7 1362.2,721.3 1367.0,716.2 1373.7,714.2 1379.0,709.7 1384.7,705.5 1391.7,705.8 1398.6,707.1 1402.9,712.5 1409.5,715.0 1412.5,721.3"/>
<polyline points="1237.4,701.5 1243.8,704.5 1246.3,711.1 1245.4,718.0 1240.2,722.7 1234.7,727.0 1227.8,726.3 1221.6,722.8 1214.9,721.0 1211.2,715.0"/>
<polyline points="1280.1,625.7 1286.1,629.4 1290.1,635.2 1294.5,640.6 1300.4,644.4 1307.3,643.8 1314.3,643.8 1321.1,645.5 1327.1,649.2 1332.7,653.4 1339.5,655.0 1345.9,652.1 1350.0,646.4 1348.9,639.5"/>
<polyline points="1331.3,783.2 1324.4,782.6 1317.9,779.9 1311.1,778.1 1305.2,774.4 1302.0,768.2 1300.2,761.4 1295.9,755.9 1290.0,752.1"/>
<polyline points="1284.5,822.4 1277.9,824.8 1272.6,829.4 1271.8,836.3 1275.0,842.6 1273.1,849.3 1268.9,854.9 1265.4,860.9 1265.4,867.9 1263.7,874.7 1263.7,881.7 1261.7,888.4 1263.9,895.1 1261.9,901.8 1255.9,905.4"/>
<polyline points="1088.9,898.6 1089.3,905.6 1086.6,912.0 1087.8,918.9 1085.0,925.3 1085.4,932.3 1083.8,939.1 1085.8,945.8 1088.4,952.4 1091.7,958.5 1098.1,961.3 1103.4,965.9"/>
<polyline points="1007.4,862.7 1000.7,864.5 993.9,866.1 988.1,870.0 981.2,868.6 974.4,870.3 970.3,875.9 963.6,878.1 957.5,881.6 955.6,888.3 954.0,895.1 953.5,902.1 951.0,908.6 949.5,915.5 945.0,920.8"/>
<polyline points="954.8,891.6 959.3,897.0 960.5,903.9 962.1,910.7 963.0,917.7 966.5,923.7 971.9,928.2"/>
<polyline points="907.7,806.1 907.1,813.0 910.6,819.1 914.5,824.9 921.1,827.4 927.3,830.7 933.8,833.3 937.8,839.0 943.7,842.8"/>
<polyline points="1102.0,809.7 1106.6,804.5 1113.2,802.1 1118.5,797.5 1122.7,791.9 1123.3,785.0 1127.3,779.2 1127.0,772.3 1129.4,765.7 1130.6,758.8 1133.7,752.5 1134.6,745.6 1131.0,739.6 1131.9,732.6"/>
<polyline points="1052.0,800.4 1057.6,804.5 1064.6,804.8 1071.2,807.1 1074.8,813.1 1080.2,817.6 1081.8,824.4 1085.5,830.4 1086.2,837.3"/>
<polyline points="897.1,785.2 895.6,778.3 890.6,773.5 883.6,772.6 878.2,768.2 871.4,766.7 864.4,765.9 857.6,767.3"/>
<polyline points="1043.0,844.0 1048.7,839.9 1054.6,836.1 1058.2,830.1 1062.4,824.5 1068.4,821.0 1074.2,817.0 1080.7,814.5 1087.3,817.1 1093.0,821.0 1099.6,823.6 1102.5,829.9 1107.2,835.1"/>
<polyline points="837.5,260.3 831.5,263.9 825.3,267.0 821.1,272.7 817.8,278.9 819.3,285.7 822.8,291.8"/>
<polyline points="758.4,286.2 751.8,283.8 748.5,277.6 741.9,275.4 734.9,275.3 728.8,271.9 722.2,269.4 715.3,268.5 708.3,267.5"/>
<polyline points="692.6,292.1 686.0,289.9 679.1,288.4 672.4,290.3 665.5,289.2 661.3,283.5 656.7,278.2 649.8,277.8 643.0,275.8 636.1,276.5"/>
<polyline points="807.9,254.9 802.4,259.2 795.5,258.5 790.1,254.0 786.6,247.9 780.4,244.6 778.3,238.0 778.9,231.0 782.7,225.2 786.3,219.1 791.9,214.9"/>
<polyline points="838.5,255.0 839.0,248.1 835.4,242.0 828.7,240.2 822.0,238.1 815.1,239.3 808.1,238.9 802.4,234.7 799.2,228.6 794.2,223.6 791.0,217.4"/>
</g>
<polygon points="1363.0,262.0 1300.0,300.0 1226.5,361.9 1225.5,373.8 1223.5,376.8 1213.6,379.8 1203.6,387.8 1193.7,399.7 1189.7,404.7 1183.7,401.7 1177.8,405.7 1172.8,417.6 1169.8,419.6 1166.8,429.6 1165.8,439.5 1163.8,451.4 1159.9,459.4 1157.9,469.4 1152.9,477.3 1153.9,487.3 1159.9,499.2 1165.8,511.1 1169.8,520.1 1166.8,513.4 1184.7,533.5 1207.1,549.2 1218.3,562.6 1218.3,578.3 1229.5,598.4 1256.3,620.8 1283.1,647.6 1310.0,665.5 1332.3,683.4 1350.2,701.3 1363.0,712.0" fill="#d4e6ea"/>
<g stroke="#000" stroke-opacity=".035" stroke-width="1">
<line x1="814.5" y1="218" x2="814.5" y2="903"/>
<line x1="1032.5" y1="218" x2="1032.5" y2="903"/>
<line x1="1250.5" y1="218" x2="1250.5" y2="903"/>
<line x1="685" y1="236.5" x2="1362" y2="236.5"/>
<line x1="685" y1="453.5" x2="1362" y2="453.5"/>
<line x1="685" y1="670.5" x2="1362" y2="670.5"/>
<line x1="685" y1="888.5" x2="1362" y2="888.5"/>
</g>
<polygon points="897.7,210.0 897.1,214.0 897.7,218.0 901.8,219.5 905.1,222.3 908.7,224.6 910.8,228.2 913.9,231.1 915.9,234.8 918.7,237.9 920.3,241.4 920.3,245.4 922.0,248.9 923.3,252.9 926.2,256.0 927.5,260.0 930.6,257.9 934.1,256.7 935.3,253.1 933.9,249.2 935.2,245.6 938.6,246.7 938.6,250.7 939.7,254.5 946.3,252.3 948.2,257.2 949.6,262.2 948.3,265.7 945.6,268.5 945.0,272.3 943.0,275.5 941.9,279.1 941.5,282.8 940.8,286.5 937.8,290.2 935.2,294.2 937.8,297.2 940.9,299.7 944.1,302.0 946.7,305.4 949.8,308.4 952.5,311.8 955.1,315.2 957.3,318.4 960.9,320.0 962.6,323.7 966.3,325.2 968.4,328.5 972.9,329.2 977.1,331.4 981.7,331.8 986.1,330.7 988.6,333.5 992.3,334.7 994.9,337.3 998.8,339.6 1002.7,341.8 1005.7,339.9 1008.2,337.3 1008.7,333.6 1009.4,329.9 1010.4,326.3 1013.9,325.5 1017.1,323.8 1020.5,322.6 1023.6,320.8 1027.3,319.6 1031.1,319.0 1034.7,317.4 1038.6,317.9 1042.1,319.6 1045.7,320.8 1048.8,322.7 1051.6,325.0 1054.2,327.4 1056.7,330.0 1060.0,333.5 1064.0,336.1 1068.9,337.3 1072.8,340.0 1076.2,343.4 1073.1,345.8 1070.1,348.2 1065.2,353.1 1060.9,356.0 1056.1,357.9 1056.6,361.6 1057.9,365.2 1062.8,367.1 1065.7,364.8 1069.2,363.6 1072.5,362.2 1076.2,357.9 1079.8,361.6 1076.8,364.1 1073.7,366.5 1073.5,371.4 1073.7,376.2 1077.2,377.1 1080.3,378.8 1083.5,380.4 1087.6,381.7 1091.4,383.8 1095.6,384.7 1099.2,387.1 1102.9,389.5 1100.9,392.8 1099.4,396.4 1096.8,399.3 1092.0,404.1 1091.0,408.3 1090.8,412.6 1087.2,415.2 1083.5,417.5 1080.7,420.5 1078.7,424.1 1076.2,427.2 1071.3,427.4 1066.5,428.4 1063.9,426.0 1061.0,424.0 1057.9,422.3 1053.9,421.6 1049.9,421.2 1045.8,421.1 1039.7,422.3 1036.1,423.6 1032.6,425.4 1032.2,430.4 1031.5,435.4 1031.7,439.8 1032.6,444.2 1029.5,446.8 1026.0,448.6 1022.1,450.9 1018.2,453.0 1021.9,455.1 1025.2,457.7 1028.6,460.3 1032.6,461.9 1036.1,464.3 1039.5,466.7 1043.5,468.3 1047.0,470.7 1049.9,473.2 1054.0,473.5 1056.9,476.1 1060.5,477.3 1063.5,479.6 1066.6,482.6 1070.5,484.2 1074.5,485.9 1077.6,488.8 1080.5,491.1 1083.2,493.6 1086.4,495.5 1090.0,497.2 1093.6,499.0 1097.5,499.9 1101.9,500.8 1106.3,502.1 1110.2,503.9 1113.5,506.8 1117.3,508.7 1115.2,511.8 1114.0,515.4 1112.8,519.0 1113.5,522.8 1112.9,526.4 1115.4,529.5 1117.3,533.0 1120.7,535.2 1122.9,538.6 1128.4,540.8 1131.9,542.6 1135.8,543.5 1139.4,545.2 1142.7,548.2 1145.0,552.1 1148.3,555.1 1149.7,558.8 1151.7,562.3 1152.7,566.2 1154.5,570.0 1156.5,573.7 1158.3,577.6 1159.3,581.7 1162.3,585.4 1166.0,588.3 1168.6,591.2 1171.0,594.3 1174.1,596.8 1175.6,600.6 1179.0,602.9 1181.4,606.0 1184.4,609.2 1187.7,611.9 1191.4,614.2 1194.7,617.0 1198.5,617.6 1202.4,618.1 1203.5,622.2 1205.7,625.9 1207.4,630.6 1210.2,634.7 1212.4,640.2 1217.5,641.4 1222.3,643.5 1223.2,647.9 1223.9,652.3 1223.4,656.8 1224.5,661.1 1225.3,665.5 1225.6,670.0 1228.1,673.3 1230.4,676.2 1232.3,679.3 1234.7,682.1 1238.7,684.1 1242.4,686.5 1244.6,679.9 1248.0,679.9 1248.5,684.4 1250.2,688.7 1253.1,692.4 1256.8,695.4 1260.2,698.1 1264.0,700.0 1267.8,702.0 1270.3,704.7 1271.3,708.3 1274.9,709.8 1278.8,710.4 1282.6,711.5 1286.2,712.8 1289.9,714.3 1293.4,716.0 1293.7,720.5 1293.4,724.9 1289.9,726.0 1286.9,728.0 1284.4,730.7 1280.7,731.3 1277.9,733.7 1276.7,737.3 1276.1,741.0 1275.7,744.8 1278.3,748.1 1281.2,751.1 1284.6,753.6 1286.5,758.2 1289.0,762.5 1292.7,764.6 1296.8,765.7 1300.4,768.1 1304.5,769.1 1305.7,773.4 1306.4,777.8 1306.7,782.3 1306.2,786.2 1306.4,790.2 1305.1,793.9 1304.5,797.8 1300.0,800.0 1295.6,802.2 1296.6,805.5 1297.2,809.1 1299.7,811.9 1300.0,815.5 1299.0,818.8 1297.7,822.1 1296.4,825.4 1295.6,828.8 1293.1,831.6 1290.4,834.2 1287.1,836.1 1285.6,839.9 1282.4,842.0 1279.0,842.9 1276.0,845.0 1272.4,845.1 1269.1,846.4 1265.6,847.5 1263.1,850.2 1259.4,851.0 1256.7,853.5 1253.6,855.3 1249.6,855.7 1246.1,858.3 1241.9,858.2 1238.2,859.7 1234.4,858.5 1231.0,856.2 1227.1,855.3 1224.3,852.0 1221.6,848.6 1219.2,845.0 1216.1,842.0 1211.7,843.8 1207.2,845.3 1203.5,845.6 1199.8,845.4 1196.2,846.4 1192.2,848.1 1188.9,851.0 1185.1,853.1 1180.7,855.3 1182.9,858.6 1184.4,862.4 1187.1,865.4 1189.6,868.5 1191.3,872.1 1192.8,875.8 1194.0,879.6 1190.5,883.3 1187.3,887.3 1183.1,885.2 1178.5,884.0 1174.9,882.9 1171.3,881.9 1167.5,881.8 1162.6,879.7 1158.6,876.3 1154.8,876.8 1151.2,876.1 1147.6,875.2 1143.7,873.7 1139.7,872.3 1135.8,870.7 1131.9,869.1 1127.7,868.5 1124.5,865.1 1121.0,861.9 1119.9,855.3 1123.9,853.3 1127.7,850.9 1131.9,848.2 1136.5,846.4 1139.0,842.7 1142.1,839.3 1144.3,835.4 1144.3,831.4 1144.6,827.5 1146.4,823.8 1146.5,819.9 1145.6,816.2 1144.0,812.6 1143.1,808.9 1145.3,804.6 1146.5,800.0 1143.9,797.3 1141.7,794.3 1139.8,791.2 1141.4,787.4 1143.4,783.7 1145.4,780.1 1139.8,777.9 1140.9,773.5 1145.3,771.0 1149.6,768.3 1150.0,763.7 1151.8,759.4 1151.6,755.7 1151.8,752.0 1150.7,748.4 1146.6,746.9 1143.3,744.2 1139.7,741.8 1138.1,738.5 1135.9,735.7 1133.0,733.5 1130.8,730.7 1130.6,726.7 1131.9,723.0 1127.8,721.2 1124.2,718.6 1120.4,718.3 1116.9,717.2 1113.7,714.9 1109.8,714.8 1106.5,713.0 1104.3,708.8 1104.2,704.0 1102.1,699.8 1098.5,697.4 1096.5,693.6 1093.3,690.9 1091.4,687.4 1088.4,684.6 1086.0,681.5 1084.4,677.7 1084.6,674.1 1084.6,670.6 1084.2,667.1 1082.8,663.6 1083.3,660.0 1084.0,656.0 1083.8,652.0 1084.2,648.0 1083.8,643.6 1085.0,639.1 1084.2,634.7 1084.4,630.1 1085.6,625.6 1087.5,621.4 1087.8,617.5 1086.2,613.8 1086.3,609.9 1086.4,606.0 1083.2,603.1 1081.4,598.9 1078.1,596.0 1075.4,592.7 1072.2,590.7 1069.3,588.2 1066.0,586.2 1063.2,583.6 1059.9,581.7 1057.7,578.9 1054.6,577.0 1052.4,574.2 1049.8,571.8 1047.1,569.5 1044.9,566.4 1043.5,562.9 1041.7,559.5 1039.0,556.8 1036.8,552.9 1034.1,549.3 1032.1,545.2 1030.6,541.7 1028.0,538.9 1026.1,535.7 1023.4,533.0 1019.3,535.2 1015.3,537.7 1013.5,533.6 1009.7,532.7 1005.8,532.4 1002.0,531.3 999.5,528.7 996.2,527.2 992.5,526.1 988.7,525.6 985.0,524.3 981.1,524.3 976.5,525.3 971.8,525.5 969.8,528.7 967.2,531.3 971.8,533.6 970.7,535.9 965.8,537.0 961.4,539.4 960.2,545.2 957.4,549.6 955.6,554.5 954.5,560.2 951.0,563.1 945.2,559.7 941.5,560.6 938.2,562.6 934.3,564.3 931.3,567.2 926.6,571.8 924.3,576.5 919.7,574.2 917.0,571.8 915.5,568.4 913.5,565.5 910.3,563.5 908.5,560.3 906.1,557.7 902.7,555.8 899.1,554.3 896.0,551.9 892.9,549.1 889.6,546.6 885.9,544.6 880.7,544.6 875.7,543.2 874.3,549.0 871.7,552.2 868.4,554.7 865.6,557.7 862.4,556.1 858.8,555.7 855.4,554.8 853.8,558.6 853.1,562.7 851.1,566.3 845.3,569.2 841.6,570.3 838.1,572.1 836.6,577.9 832.8,580.0 828.9,581.7 825.0,583.7 823.0,587.0 819.1,588.6 817.4,592.1 815.1,595.2 812.0,597.5 809.1,600.1 806.9,603.3 803.2,601.1 799.2,599.5 795.5,597.3 791.7,595.3 787.4,593.9 789.7,590.6 790.9,586.9 791.7,583.0 793.2,579.4 794.2,574.9 796.1,570.7 798.4,567.7 801.5,565.4 803.3,562.0 806.3,558.7 808.4,554.8 808.2,550.9 808.0,547.0 809.1,543.2 806.2,538.8 808.4,533.0 804.7,530.7 802.2,527.1 799.0,524.3 799.7,528.2 801.6,524.5 801.9,520.4 803.8,516.9 807.0,514.5 809.2,511.2 811.8,508.3 813.3,504.0 812.8,499.4 814.0,495.0 814.6,490.6 815.6,486.3 815.1,481.8 817.8,478.3 820.7,475.1 816.9,472.2 814.0,468.5 814.5,464.0 812.8,459.7 812.9,455.2 811.7,451.6 811.2,447.9 810.7,444.2 815.1,439.8 815.7,435.9 815.1,432.0 811.7,430.6 808.2,429.9 804.6,429.1 801.2,427.6 797.5,427.6 793.8,428.2 790.1,427.1 786.4,427.6 783.7,430.2 781.7,433.4 778.9,435.8 776.5,438.7 772.2,436.5 768.7,433.1 765.6,435.2 762.1,436.5 759.1,433.2 755.8,430.2 753.3,426.5 751.5,423.0 751.1,419.0 749.6,415.4 751.8,412.4 752.8,408.7 754.3,405.3 757.6,402.8 758.7,399.2 759.8,395.4 759.9,391.5 760.2,387.6 759.8,383.7 756.4,382.7 753.1,381.5 751.9,377.3 749.8,373.5 747.5,369.8 745.4,366.1 741.5,365.8 737.7,365.0 735.5,367.8 733.1,370.4 731.5,373.7 728.8,376.0 723.3,372.7 724.3,369.2 724.7,365.6 724.7,362.0 726.6,358.7 726.6,355.0 728.1,351.6 729.4,348.1 731.3,344.9 733.3,341.8 736.2,338.9 739.1,336.0 742.5,333.8 745.4,330.9 748.7,328.5 752.5,327.3 756.6,328.3 760.2,326.1 764.2,326.3 761.1,323.8 757.6,321.9 758.1,317.4 758.7,313.0 761.2,310.2 763.8,307.7 766.8,305.4 769.7,303.1 771.4,299.7 772.1,296.1 771.5,292.1 773.0,288.7 777.2,288.1 780.7,285.3 785.1,285.1 788.8,283.1 792.9,282.1 795.2,278.6 799.1,276.7 801.3,273.3 804.0,270.1 807.3,267.7 810.6,271.0 808.7,274.3 807.4,277.9 805.1,281.0 806.4,284.4 809.4,286.8 810.8,290.1 812.8,293.1 815.5,295.5 817.2,298.7 821.0,297.6 824.4,295.2 828.3,294.2 832.0,293.5 835.6,294.4 839.3,294.2 843.8,295.3 847.5,295.2 851.1,296.3 854.8,296.5 853.7,292.4 851.5,288.7 851.3,284.3 851.5,279.8 852.6,275.5 852.7,271.9 853.4,268.4 852.5,264.8 854.0,261.4 853.7,257.8 853.9,253.3 853.6,248.9 852.6,244.5 850.7,240.3 850.4,235.7 848.2,232.8 846.5,229.4 843.8,226.8 841.6,222.6 840.4,218.0 840.2,214.0 840.4,210.0" fill="#fff" opacity=".45"/>
<polygon points="920.0,488.0 925.0,492.0 930.0,505.0 932.0,520.0 927.0,525.0 921.0,512.0 917.0,498.0" fill="#b9d9e2"/>
<polygon points="1097.0,565.0 1105.0,568.0 1118.0,578.0 1128.0,588.0 1124.0,591.0 1110.0,582.0 1098.0,572.0" fill="#b9d9e2"/>
<polygon points="900.5,653.0 908.0,651.0 913.0,656.0 920.0,660.0 916.0,668.0 912.0,677.0 909.0,668.0 904.0,660.0" fill="#b9d9e2"/>
<polygon points="977.0,667.0 985.0,660.0 990.0,653.0 995.0,647.0 991.0,658.0 986.0,668.0 979.0,672.0" fill="#b9d9e2"/>
<polygon points="1002.0,618.0 1007.0,617.0 1011.0,627.0 1007.0,629.0" fill="#b9d9e2"/>
<polygon points="1038.0,622.0 1044.0,622.0 1046.0,630.0 1040.0,629.0" fill="#b9d9e2"/>
<polygon points="745.0,556.0 753.0,554.0 758.0,566.0 750.0,572.0" fill="#b9d9e2"/>
<polygon points="1045.0,515.0 1058.0,513.0 1062.0,520.0 1048.0,522.0" fill="#b9d9e2"/>
<g fill="none" stroke="#4d4d4d" stroke-width="1.25" stroke-linejoin="round" opacity=".9">
<polygon points="897.7,210.0 897.1,214.0 897.7,218.0 901.8,219.5 905.1,222.3 908.7,224.6 910.8,228.2 913.9,231.1 915.9,234.8 918.7,237.9 920.3,241.4 920.3,245.4 922.0,248.9 923.3,252.9 926.2,256.0 927.5,260.0 930.6,257.9 934.1,256.7 935.3,253.1 933.9,249.2 935.2,245.6 938.6,246.7 938.6,250.7 939.7,254.5 946.3,252.3 948.2,257.2 949.6,262.2 948.3,265.7 945.6,268.5 945.0,272.3 943.0,275.5 941.9,279.1 941.5,282.8 940.8,286.5 937.8,290.2 935.2,294.2 937.8,297.2 940.9,299.7 944.1,302.0 946.7,305.4 949.8,308.4 952.5,311.8 955.1,315.2 957.3,318.4 960.9,320.0 962.6,323.7 966.3,325.2 968.4,328.5 972.9,329.2 977.1,331.4 981.7,331.8 986.1,330.7 988.6,333.5 992.3,334.7 994.9,337.3 998.8,339.6 1002.7,341.8 1005.7,339.9 1008.2,337.3 1008.7,333.6 1009.4,329.9 1010.4,326.3 1013.9,325.5 1017.1,323.8 1020.5,322.6 1023.6,320.8 1027.3,319.6 1031.1,319.0 1034.7,317.4 1038.6,317.9 1042.1,319.6 1045.7,320.8 1048.8,322.7 1051.6,325.0 1054.2,327.4 1056.7,330.0 1060.0,333.5 1064.0,336.1 1068.9,337.3 1072.8,340.0 1076.2,343.4 1073.1,345.8 1070.1,348.2 1065.2,353.1 1060.9,356.0 1056.1,357.9 1056.6,361.6 1057.9,365.2 1062.8,367.1 1065.7,364.8 1069.2,363.6 1072.5,362.2 1076.2,357.9 1079.8,361.6 1076.8,364.1 1073.7,366.5 1073.5,371.4 1073.7,376.2 1077.2,377.1 1080.3,378.8 1083.5,380.4 1087.6,381.7 1091.4,383.8 1095.6,384.7 1099.2,387.1 1102.9,389.5 1100.9,392.8 1099.4,396.4 1096.8,399.3 1092.0,404.1 1091.0,408.3 1090.8,412.6 1087.2,415.2 1083.5,417.5 1080.7,420.5 1078.7,424.1 1076.2,427.2 1071.3,427.4 1066.5,428.4 1063.9,426.0 1061.0,424.0 1057.9,422.3 1053.9,421.6 1049.9,421.2 1045.8,421.1 1039.7,422.3 1036.1,423.6 1032.6,425.4 1032.2,430.4 1031.5,435.4 1031.7,439.8 1032.6,444.2 1029.5,446.8 1026.0,448.6 1022.1,450.9 1018.2,453.0 1021.9,455.1 1025.2,457.7 1028.6,460.3 1032.6,461.9 1036.1,464.3 1039.5,466.7 1043.5,468.3 1047.0,470.7 1049.9,473.2 1054.0,473.5 1056.9,476.1 1060.5,477.3 1063.5,479.6 1066.6,482.6 1070.5,484.2 1074.5,485.9 1077.6,488.8 1080.5,491.1 1083.2,493.6 1086.4,495.5 1090.0,497.2 1093.6,499.0 1097.5,499.9 1101.9,500.8 1106.3,502.1 1110.2,503.9 1113.5,506.8 1117.3,508.7 1115.2,511.8 1114.0,515.4 1112.8,519.0 1113.5,522.8 1112.9,526.4 1115.4,529.5 1117.3,533.0 1120.7,535.2 1122.9,538.6 1128.4,540.8 1131.9,542.6 1135.8,543.5 1139.4,545.2 1142.7,548.2 1145.0,552.1 1148.3,555.1 1149.7,558.8 1151.7,562.3 1152.7,566.2 1154.5,570.0 1156.5,573.7 1158.3,577.6 1159.3,581.7 1162.3,585.4 1166.0,588.3 1168.6,591.2 1171.0,594.3 1174.1,596.8 1175.6,600.6 1179.0,602.9 1181.4,606.0 1184.4,609.2 1187.7,611.9 1191.4,614.2 1194.7,617.0 1198.5,617.6 1202.4,618.1 1203.5,622.2 1205.7,625.9 1207.4,630.6 1210.2,634.7 1212.4,640.2 1217.5,641.4 1222.3,643.5 1223.2,647.9 1223.9,652.3 1223.4,656.8 1224.5,661.1 1225.3,665.5 1225.6,670.0 1228.1,673.3 1230.4,676.2 1232.3,679.3 1234.7,682.1 1238.7,684.1 1242.4,686.5 1244.6,679.9 1248.0,679.9 1248.5,684.4 1250.2,688.7 1253.1,692.4 1256.8,695.4 1260.2,698.1 1264.0,700.0 1267.8,702.0 1270.3,704.7 1271.3,708.3 1274.9,709.8 1278.8,710.4 1282.6,711.5 1286.2,712.8 1289.9,714.3 1293.4,716.0 1293.7,720.5 1293.4,724.9 1289.9,726.0 1286.9,728.0 1284.4,730.7 1280.7,731.3 1277.9,733.7 1276.7,737.3 1276.1,741.0 1275.7,744.8 1278.3,748.1 1281.2,751.1 1284.6,753.6 1286.5,758.2 1289.0,762.5 1292.7,764.6 1296.8,765.7 1300.4,768.1 1304.5,769.1 1305.7,773.4 1306.4,777.8 1306.7,782.3 1306.2,786.2 1306.4,790.2 1305.1,793.9 1304.5,797.8 1300.0,800.0 1295.6,802.2 1296.6,805.5 1297.2,809.1 1299.7,811.9 1300.0,815.5 1299.0,818.8 1297.7,822.1 1296.4,825.4 1295.6,828.8 1293.1,831.6 1290.4,834.2 1287.1,836.1 1285.6,839.9 1282.4,842.0 1279.0,842.9 1276.0,845.0 1272.4,845.1 1269.1,846.4 1265.6,847.5 1263.1,850.2 1259.4,851.0 1256.7,853.5 1253.6,855.3 1249.6,855.7 1246.1,858.3 1241.9,858.2 1238.2,859.7 1234.4,858.5 1231.0,856.2 1227.1,855.3 1224.3,852.0 1221.6,848.6 1219.2,845.0 1216.1,842.0 1211.7,843.8 1207.2,845.3 1203.5,845.6 1199.8,845.4 1196.2,846.4 1192.2,848.1 1188.9,851.0 1185.1,853.1 1180.7,855.3 1182.9,858.6 1184.4,862.4 1187.1,865.4 1189.6,868.5 1191.3,872.1 1192.8,875.8 1194.0,879.6 1190.5,883.3 1187.3,887.3 1183.1,885.2 1178.5,884.0 1174.9,882.9 1171.3,881.9 1167.5,881.8 1162.6,879.7 1158.6,876.3 1154.8,876.8 1151.2,876.1 1147.6,875.2 1143.7,873.7 1139.7,872.3 1135.8,870.7 1131.9,869.1 1127.7,868.5 1124.5,865.1 1121.0,861.9 1119.9,855.3 1123.9,853.3 1127.7,850.9 1131.9,848.2 1136.5,846.4 1139.0,842.7 1142.1,839.3 1144.3,835.4 1144.3,831.4 1144.6,827.5 1146.4,823.8 1146.5,819.9 1145.6,816.2 1144.0,812.6 1143.1,808.9 1145.3,804.6 1146.5,800.0 1143.9,797.3 1141.7,794.3 1139.8,791.2 1141.4,787.4 1143.4,783.7 1145.4,780.1 1139.8,777.9 1140.9,773.5 1145.3,771.0 1149.6,768.3 1150.0,763.7 1151.8,759.4 1151.6,755.7 1151.8,752.0 1150.7,748.4 1146.6,746.9 1143.3,744.2 1139.7,741.8 1138.1,738.5 1135.9,735.7 1133.0,733.5 1130.8,730.7 1130.6,726.7 1131.9,723.0 1127.8,721.2 1124.2,718.6 1120.4,718.3 1116.9,717.2 1113.7,714.9 1109.8,714.8 1106.5,713.0 1104.3,708.8 1104.2,704.0 1102.1,699.8 1098.5,697.4 1096.5,693.6 1093.3,690.9 1091.4,687.4 1088.4,684.6 1086.0,681.5 1084.4,677.7 1084.6,674.1 1084.6,670.6 1084.2,667.1 1082.8,663.6 1083.3,660.0 1084.0,656.0 1083.8,652.0 1084.2,648.0 1083.8,643.6 1085.0,639.1 1084.2,634.7 1084.4,630.1 1085.6,625.6 1087.5,621.4 1087.8,617.5 1086.2,613.8 1086.3,609.9 1086.4,606.0 1083.2,603.1 1081.4,598.9 1078.1,596.0 1075.4,592.7 1072.2,590.7 1069.3,588.2 1066.0,586.2 1063.2,583.6 1059.9,581.7 1057.7,578.9 1054.6,577.0 1052.4,574.2 1049.8,571.8 1047.1,569.5 1044.9,566.4 1043.5,562.9 1041.7,559.5 1039.0,556.8 1036.8,552.9 1034.1,549.3 1032.1,545.2 1030.6,541.7 1028.0,538.9 1026.1,535.7 1023.4,533.0 1019.3,535.2 1015.3,537.7 1013.5,533.6 1009.7,532.7 1005.8,532.4 1002.0,531.3 999.5,528.7 996.2,527.2 992.5,526.1 988.7,525.6 985.0,524.3 981.1,524.3 976.5,525.3 971.8,525.5 969.8,528.7 967.2,531.3 971.8,533.6 970.7,535.9 965.8,537.0 961.4,539.4 960.2,545.2 957.4,549.6 955.6,554.5 954.5,560.2 951.0,563.1 945.2,559.7 941.5,560.6 938.2,562.6 934.3,564.3 931.3,567.2 926.6,571.8 924.3,576.5 919.7,574.2 917.0,571.8 915.5,568.4 913.5,565.5 910.3,563.5 908.5,560.3 906.1,557.7 902.7,555.8 899.1,554.3 896.0,551.9 892.9,549.1 889.6,546.6 885.9,544.6 880.7,544.6 875.7,543.2 874.3,549.0 871.7,552.2 868.4,554.7 865.6,557.7 862.4,556.1 858.8,555.7 855.4,554.8 853.8,558.6 853.1,562.7 851.1,566.3 845.3,569.2 841.6,570.3 838.1,572.1 836.6,577.9 832.8,580.0 828.9,581.7 825.0,583.7 823.0,587.0 819.1,588.6 817.4,592.1 815.1,595.2 812.0,597.5 809.1,600.1 806.9,603.3 803.2,601.1 799.2,599.5 795.5,597.3 791.7,595.3 787.4,593.9 789.7,590.6 790.9,586.9 791.7,583.0 793.2,579.4 794.2,574.9 796.1,570.7 798.4,567.7 801.5,565.4 803.3,562.0 806.3,558.7 808.4,554.8 808.2,550.9 808.0,547.0 809.1,543.2 806.2,538.8 808.4,533.0 804.7,530.7 802.2,527.1 799.0,524.3 799.7,528.2 801.6,524.5 801.9,520.4 803.8,516.9 807.0,514.5 809.2,511.2 811.8,508.3 813.3,504.0 812.8,499.4 814.0,495.0 814.6,490.6 815.6,486.3 815.1,481.8 817.8,478.3 820.7,475.1 816.9,472.2 814.0,468.5 814.5,464.0 812.8,459.7 812.9,455.2 811.7,451.6 811.2,447.9 810.7,444.2 815.1,439.8 815.7,435.9 815.1,432.0 811.7,430.6 808.2,429.9 804.6,429.1 801.2,427.6 797.5,427.6 793.8,428.2 790.1,427.1 786.4,427.6 783.7,430.2 781.7,433.4 778.9,435.8 776.5,438.7 772.2,436.5 768.7,433.1 765.6,435.2 762.1,436.5 759.1,433.2 755.8,430.2 753.3,426.5 751.5,423.0 751.1,419.0 749.6,415.4 751.8,412.4 752.8,408.7 754.3,405.3 757.6,402.8 758.7,399.2 759.8,395.4 759.9,391.5 760.2,387.6 759.8,383.7 756.4,382.7 753.1,381.5 751.9,377.3 749.8,373.5 747.5,369.8 745.4,366.1 741.5,365.8 737.7,365.0 735.5,367.8 733.1,370.4 731.5,373.7 728.8,376.0 723.3,372.7 724.3,369.2 724.7,365.6 724.7,362.0 726.6,358.7 726.6,355.0 728.1,351.6 729.4,348.1 731.3,344.9 733.3,341.8 736.2,338.9 739.1,336.0 742.5,333.8 745.4,330.9 748.7,328.5 752.5,327.3 756.6,328.3 760.2,326.1 764.2,326.3 761.1,323.8 757.6,321.9 758.1,317.4 758.7,313.0 761.2,310.2 763.8,307.7 766.8,305.4 769.7,303.1 771.4,299.7 772.1,296.1 771.5,292.1 773.0,288.7 777.2,288.1 780.7,285.3 785.1,285.1 788.8,283.1 792.9,282.1 795.2,278.6 799.1,276.7 801.3,273.3 804.0,270.1 807.3,267.7 810.6,271.0 808.7,274.3 807.4,277.9 805.1,281.0 806.4,284.4 809.4,286.8 810.8,290.1 812.8,293.1 815.5,295.5 817.2,298.7 821.0,297.6 824.4,295.2 828.3,294.2 832.0,293.5 835.6,294.4 839.3,294.2 843.8,295.3 847.5,295.2 851.1,296.3 854.8,296.5 853.7,292.4 851.5,288.7 851.3,284.3 851.5,279.8 852.6,275.5 852.7,271.9 853.4,268.4 852.5,264.8 854.0,261.4 853.7,257.8 853.9,253.3 853.6,248.9 852.6,244.5 850.7,240.3 850.4,235.7 848.2,232.8 846.5,229.4 843.8,226.8 841.6,222.6 840.4,218.0 840.2,214.0 840.4,210.0"/>
<polyline points="764.2,326.3 766.9,328.7 769.2,331.6 772.6,333.4 774.5,336.7 777.2,339.1 779.7,341.8 781.8,345.6 782.3,350.0 784.1,353.9 788.3,356.2 792.9,357.2 794.5,361.0 797.0,364.3 798.4,368.2 800.7,371.6"/>
<polyline points="854.8,296.5 853.6,300.0 852.9,303.5 853.2,307.2 852.6,310.8 848.5,313.0 844.4,315.1 840.4,317.4 837.1,320.6 835.7,325.1 832.7,328.5 830.6,333.3 827.2,337.3 830.1,340.7 834.4,342.6 837.1,346.2 837.3,350.6 838.2,355.0 837.0,358.5 834.2,361.0 832.3,364.1 830.5,367.2 826.9,367.5 823.6,369.2 819.8,368.5 816.3,369.5 812.8,370.5 808.8,371.5 804.7,371.2 800.7,371.6"/>
<polyline points="813.3,370.5 813.3,376.4 812.3,381.4 810.1,385.9 806.4,386.6 802.6,385.7 798.9,385.9 796.5,388.8 793.3,390.6 790.3,392.8 787.8,395.5 783.2,396.0 778.6,396.9 774.3,398.7 775.0,403.5"/>
<polyline points="749.6,415.4 753.4,415.2 757.0,413.8 760.7,413.0 764.5,412.1 767.9,410.3 771.1,407.9 774.5,406.2 778.2,405.0 783.0,406.5 787.8,408.2 792.5,409.5 797.4,409.8 800.8,408.7 803.7,406.6 807.3,407.5 810.1,409.8 813.3,411.4 817.3,412.2 821.2,410.9 825.2,411.3 829.2,411.4 833.4,410.6 837.7,410.4 842.0,409.8 845.1,407.6 848.3,405.6 851.5,403.5 854.9,401.7 859.0,401.9 862.5,400.4 865.9,398.7 869.2,396.8 872.5,394.9 875.4,392.3 878.6,389.5 880.1,385.4 883.4,382.7 886.6,379.6"/>
<polyline points="854.8,296.5 858.0,298.1 861.6,298.7 864.7,300.4 867.8,302.3 871.3,303.1 874.7,304.2 878.0,306.4 881.4,308.5 884.2,311.5 888.0,313.0 891.0,315.0 893.3,317.7 896.7,319.1 899.0,321.9 900.6,325.2 903.4,327.4 907.8,326.3 911.8,324.0 915.8,322.0 919.8,319.7 923.5,316.9 927.5,314.7 931.9,313.0 933.4,308.0 935.2,303.1 939.6,302.1 944.1,302.0"/>
<polyline points="899.0,326.3 898.5,330.7 897.5,335.0 897.7,339.5 895.4,342.2 893.0,344.9 891.4,348.2 888.8,350.6 887.5,354.0 886.0,357.2 884.5,360.5 883.3,363.9 883.6,368.3 883.8,372.7 883.3,377.1 886.6,379.6"/>
<polyline points="981.7,331.8 977.3,333.1 972.8,333.9 968.4,335.1 967.0,338.6 965.1,341.8 965.6,346.2 965.0,350.6 965.1,355.0 961.8,359.4 963.9,362.8 967.3,365.0 965.7,369.8 965.1,374.9 964.1,378.5 961.8,381.5 960.3,386.0 958.5,390.4 958.7,394.4 958.6,398.5 958.5,402.5"/>
<polyline points="958.5,402.5 962.2,402.4 965.7,403.1 969.1,405.0 972.8,404.7 976.6,404.4 980.2,405.1 983.9,405.8 987.8,405.0 991.7,403.8 995.6,403.1 999.3,401.4 1002.7,398.1 1006.0,394.8 1012.6,397.0 1013.9,402.0 1016.0,406.6 1019.6,410.3 1023.8,413.3 1028.5,412.3 1032.6,410.0 1036.2,408.9 1039.2,406.6 1039.8,410.1 1041.4,413.3 1040.6,417.8 1039.7,422.3"/>
<polyline points="958.5,402.5 955.4,404.5 952.5,406.9 949.1,408.5 946.4,411.0 944.0,413.9 942.2,417.1 939.8,419.9 936.5,423.3 933.1,426.5 930.0,429.7 926.6,432.6 923.2,435.4 922.9,439.8 922.1,444.2 923.6,447.9 925.5,451.3 928.0,454.4"/>
<polyline points="851.5,403.5 852.1,407.2 853.1,410.8 853.1,414.6 853.7,418.3 853.0,422.1 853.1,425.8 854.6,429.2 854.0,433.1 855.8,436.5 856.3,440.1 859.5,443.8 863.5,446.5 862.1,450.9 859.9,455.0 857.9,459.2 858.3,463.3 857.8,467.2 856.4,471.1 856.0,475.1"/>
<polyline points="856.0,475.1 855.2,479.6 856.0,484.0 857.6,488.4 859.3,492.8 858.4,496.3 857.5,499.9 856.3,503.3 856.0,507.0 854.9,510.5 852.0,513.1 849.6,516.2 846.1,518.2 843.9,521.5 841.0,524.3 838.6,527.7 835.2,530.1 831.7,533.9 827.9,537.4 826.3,541.7 825.0,546.1 824.4,550.1 825.4,554.0 825.7,558.0 825.8,562.0 826.8,566.0 829.4,569.2 833.7,570.7 838.1,572.1"/>
<polyline points="856.0,475.1 859.5,471.3 863.8,468.5 866.7,465.3 868.7,461.5 870.4,457.5 872.6,453.4 876.4,450.6 878.6,446.5 882.8,447.1 887.1,447.4 891.3,446.5 894.9,447.2 898.6,447.5 902.2,448.5 905.7,449.7 908.3,453.4 911.4,456.8 913.6,460.8"/>
<polyline points="913.6,460.8 917.3,459.4 920.9,457.8 924.3,455.8 928.0,454.4 931.1,456.1 934.8,456.7 937.8,458.8 940.7,460.9 944.2,461.9 947.8,463.1 951.8,462.9 955.3,464.3 958.8,466.2 962.6,466.6 966.3,467.4 969.8,466.6 973.4,467.0 976.9,466.8 980.4,466.1 984.0,466.3 987.6,468.2 990.9,470.8 995.0,471.8 998.4,472.7 1001.9,473.4 1005.2,474.5 1008.3,476.2 1012.8,476.0 1017.1,477.3 1017.7,481.4 1017.1,485.4 1017.1,489.5"/>
<polyline points="1017.1,489.5 1020.4,490.8 1023.6,492.2 1027.1,492.8 1031.1,492.5 1034.8,493.9 1037.9,490.9 1041.4,488.4 1043.4,483.9 1045.9,479.6 1046.0,475.1 1047.0,470.7"/>
<polyline points="913.6,460.8 911.0,466.3 911.6,470.0 912.8,473.6 913.3,477.3 914.3,481.1 915.7,484.9 915.1,489.1 916.6,492.8 916.3,497.4 917.7,501.7 919.7,505.2 922.5,508.2 925.1,511.3 926.6,515.1 927.8,520.9"/>
<polyline points="927.8,520.9 931.2,519.7 934.8,519.1 938.7,519.5 942.4,518.3 946.3,518.5 950.1,519.1 953.8,517.9 957.7,518.5 961.4,517.4 965.7,516.9 970.1,517.2 974.4,516.0 978.8,516.2 981.1,513.9 984.0,511.0 986.9,508.1 986.7,504.0 987.5,500.0 987.5,496.0 987.4,492.0 989.0,488.0 988.4,484.0 992.8,482.9 996.3,484.3 999.0,486.9 1002.2,488.7 1005.3,490.7 1008.3,492.8 1012.5,490.5 1017.1,489.5"/>
<polyline points="934.8,519.1 935.9,522.0 938.6,525.2 940.6,529.0 941.7,535.9 947.5,539.4 949.8,544.0 955.0,544.9 960.2,545.2"/>
<polyline points="875.7,543.2 874.7,539.1 875.4,534.8 873.9,530.7 874.3,526.5 878.0,526.8 881.5,525.8 885.9,525.7 890.2,525.8 891.9,530.1 894.5,533.8 900.0,534.8 903.7,536.7 907.8,537.7 911.6,539.4 917.4,542.9 923.2,539.4 927.3,537.4 931.3,535.3 936.5,535.5 941.7,535.9"/>
<polyline points="1047.1,569.5 1049.4,565.8 1050.6,561.6 1052.9,557.9 1055.0,554.1 1056.6,550.1 1058.7,546.3 1062.7,544.8 1066.5,543.0 1069.5,545.3 1073.5,545.7 1076.5,548.0 1079.8,549.6 1083.3,551.5 1086.1,554.4 1089.7,556.2 1092.5,559.0 1095.6,561.5 1098.6,564.0 1103.5,563.8 1108.5,564.0 1110.6,560.7 1114.1,558.5 1116.2,555.1 1120.3,552.0 1124.0,548.5 1123.6,543.5 1122.9,538.6"/>
<polyline points="1212.4,640.2 1208.9,639.1 1205.2,638.3 1201.5,637.6 1198.1,636.1 1194.7,634.7 1190.3,633.6 1186.9,634.3 1183.8,636.2 1180.4,637.1 1177.0,638.0 1173.4,636.6 1169.8,635.5 1166.1,634.6 1162.1,635.0 1158.5,633.8 1154.9,632.5 1151.4,634.4 1148.3,636.9 1144.3,636.9 1140.3,636.6 1136.4,636.0 1132.4,635.7 1128.4,635.8 1124.1,634.5 1119.5,634.6 1115.1,633.6 1111.4,633.8 1107.7,633.6 1104.1,632.5 1100.2,633.6 1096.6,635.1 1093.0,636.9 1091.5,640.7 1088.6,643.5 1084.2,648.0"/>
<polyline points="1243.5,687.6 1241.3,693.1 1237.0,694.5 1232.5,695.4 1231.7,700.4 1230.3,705.3 1225.9,706.4 1221.4,706.4 1218.1,707.6 1214.7,708.7 1211.7,710.8 1208.2,711.8 1204.9,713.0 1201.5,708.6 1196.6,710.0 1191.6,709.7 1190.6,713.2 1190.9,717.0 1190.8,720.6 1189.4,724.1 1185.2,726.1 1181.7,729.2 1177.2,730.7 1172.8,731.4 1168.4,730.2 1164.0,730.7 1160.7,728.9 1157.1,728.1 1153.2,728.1 1149.9,726.0 1146.3,725.2 1142.8,724.2 1139.2,723.5 1135.4,723.9 1131.9,723.0"/>
<polyline points="1149.6,768.3 1153.8,768.4 1157.7,766.7 1161.8,766.1 1165.3,766.2 1168.9,766.1 1172.4,766.0 1175.9,765.5 1179.4,765.0 1184.1,765.9 1188.3,768.3 1188.3,774.9 1191.6,777.1 1194.9,779.3 1197.9,776.5 1201.8,775.3 1204.4,772.0 1208.2,770.5 1211.8,771.8 1215.6,771.5 1219.2,772.7 1222.0,776.1 1225.7,778.4 1229.1,781.1 1232.5,783.8 1234.7,790.4"/>
<polyline points="1270.0,707.5 1266.8,709.1 1263.5,710.4 1260.3,712.1 1256.8,713.0 1253.4,715.5 1249.2,716.4 1245.7,718.6 1243.9,722.2 1241.7,725.5 1239.1,728.5 1237.0,731.9 1234.7,735.1 1233.9,738.5 1232.5,741.8 1233.5,745.4 1235.8,748.4 1234.6,752.8 1233.6,757.2 1229.4,757.4 1225.5,758.6 1221.4,759.4 1217.1,760.8 1212.5,760.6 1208.2,761.7 1204.9,766.1 1208.2,770.5"/>
<polyline points="1234.7,790.4 1237.0,786.6 1238.2,782.3 1242.5,781.2 1247.0,780.6 1251.4,780.1 1254.9,779.1 1258.5,779.3 1262.0,778.9 1265.6,779.6 1269.1,779.0 1273.3,780.3 1277.0,782.6 1280.8,784.8 1284.6,786.8 1288.9,785.1 1293.4,784.6 1296.3,787.0 1297.1,791.0 1300.0,793.4 1304.5,797.8"/>
<polyline points="1234.7,790.4 1237.4,793.6 1240.0,796.9 1243.5,799.2 1244.8,800.0 1243.7,804.5 1242.6,808.9 1240.5,812.2 1237.4,814.7 1234.9,817.7 1229.7,818.1 1224.9,819.9 1221.7,817.5 1218.3,815.5 1218.6,811.1 1217.9,806.6 1218.3,802.2 1213.9,802.9 1209.4,803.1 1205.0,802.2 1202.3,804.8 1200.9,808.4 1198.4,811.1 1197.1,815.4 1196.2,819.9 1197.7,824.7 1200.6,828.8 1202.9,833.5 1206.1,837.6 1206.2,841.5 1207.2,845.3"/>
</g>
<g font-family="Liberation Sans" font-size="10.2" fill="#333" stroke="#fff" stroke-width="2.2" paint-order="stroke" stroke-opacity=".8">
<text x="861" y="264.4">02 Phongsali</text>
<text x="764.2" y="327.8">03 Louangnamtha</text>
<text x="744.8" y="370.9">05 Bokeo</text>
<text x="820.6" y="365.6">04 Oudomxai</text>
<text x="870.3" y="390.8">06 Louangphabang</text>
<text x="996.7" y="378.2">07 Houaphan</text>
<text x="949.7" y="445.3">09 Xiangkhouang</text>
<text x="787.5" y="487.7">08 Xainyabouli</text>
<text x="922.1" y="491.7">18 Xaisomboun</text>
<text x="854.9" y="512.7">10 Vientiane</text>
<text x="1012.7" y="524.9">11 Bolikhamxai</text>
<text x="870.8" y="552.9">01 Vientiane Capital</text>
<text x="1088.6" y="599.3">12 Khammouan</text>
<text x="1122" y="682.1">13 Savannakhet</text>
<text x="1177.2" y="738.9">14 Salavan</text>
<text x="1236.4" y="759">15 Xekong</text>
<text x="1144.1" y="824.6">16 Champasak</text>
<text x="1232.5" y="824.6">17 Attapu</text>
</g>
<circle cx="942" cy="488.4" r="3.6" fill="#c9403f"/>
<circle cx="1164" cy="831.3" r="4.3" fill="#c9403f"/>
<circle cx="883.5" cy="409.3" r="13.2" fill="#000" opacity=".12"/>
<circle cx="882.5" cy="407.3" r="12.2" fill="#c9403f"/>
<text x="882.5" y="410.90000000000003" font-family="Liberation Sans" font-size="10" font-weight="700" fill="#fff" text-anchor="middle">3</text>
<circle cx="919" cy="564" r="13.6" fill="#000" opacity=".12"/>
<circle cx="918" cy="562" r="12.6" fill="#c9403f"/>
<text x="918" y="565.6" font-family="Liberation Sans" font-size="10" font-weight="700" fill="#fff" text-anchor="middle">18</text>
</svg>
<div class="a" style="left:694px;top:227px;width:28px;height:55px;border:2px solid rgba(0,0,0,.17);border-radius:4px;background:#fff;background-clip:padding-box"></div>
<div class="a" style="left:696px;top:254px;width:24px;height:1px;background:#ccc"></div>
<svg class="a" style="left:701px;top:236px" width="14" height="14" viewBox="0 0 14 14" fill="#000"><rect x="1" y="6" width="12" height="2.2"/><rect x="5.9" y="1.1" width="2.2" height="12"/></svg>
<svg class="a" style="left:701px;top:262px" width="14" height="14" viewBox="0 0 14 14" fill="#000"><rect x="1" y="6" width="12" height="2.2"/></svg>
<svg class="a" style="left:1227px;top:235px;box-shadow:2px 3px 4px rgba(0,0,0,.35)" width="128" height="127" viewBox="1227 235 128 127">
<rect x="1227" y="235" width="128" height="127" fill="#f7f4ef"/>
<path d="M1355 258 L1345 262 L1333 261 L1322 268 L1312 278 L1310 288 L1313 300 L1320 310 L1326 318 L1329.5 329 L1340 343 L1342 362 L1355 362Z" fill="#c9dde2"/>
<ellipse cx="1346" cy="286" rx="8" ry="8.5" fill="#f7f4ef"/>
<path d="M1227 314.6 L1232.9 318.2 L1238.3 334.3 L1240 362 L1227 362Z" fill="#d4e6ea"/>
<path d="M1249 343.3 L1258 341.5 L1267 346.9 L1274 354 L1274 362 L1249 362Z" fill="#d4e6ea"/>
<rect x="1248.5" y="255.5" width="85.5" height="86" fill="#ffb37c" fill-opacity=".3" stroke="#f5a060" stroke-width="1.2"/>
<g fill="none" stroke="#111" stroke-width="1.05" stroke-linejoin="round">
<polygon points="1275.5,254.4 1275.5,255.4 1276.9,256.2 1278.2,257.9 1278.6,259.3 1279.3,260.7 1280.1,260.3 1280.2,258.9 1280.7,259.0 1280.8,260.0 1281.6,259.7 1282.1,261.0 1281.2,262.7 1280.9,264.0 1280.2,265.0 1281.4,266.0 1282.7,267.7 1284.4,269.3 1286.1,269.7 1286.7,269.6 1287.8,270.4 1288.7,271.0 1289.4,270.4 1289.7,269.1 1291.4,268.4 1292.8,267.9 1294.2,268.4 1295.5,269.5 1296.5,270.3 1297.1,270.4 1298.0,271.2 1297.2,271.8 1296.6,272.4 1295.5,273.0 1295.7,274.0 1296.3,274.2 1297.5,273.6 1298.0,273.0 1298.5,273.5 1297.7,274.1 1297.7,275.3 1298.9,275.9 1300.4,276.4 1301.4,277.0 1300.6,278.2 1300.0,278.9 1299.8,279.9 1298.9,280.5 1298.0,281.8 1296.8,281.9 1295.7,281.1 1294.2,281.0 1293.4,281.1 1292.5,281.5 1292.4,282.8 1292.5,283.9 1291.7,284.5 1290.7,285.0 1292.5,286.1 1294.3,287.2 1296.4,288.4 1298.2,289.5 1299.3,290.4 1300.7,290.9 1301.8,291.2 1303.2,292.0 1302.8,292.9 1302.6,294.3 1303.2,295.1 1303.9,295.8 1304.6,296.1 1306.0,296.6 1307.1,297.9 1307.6,299.3 1308.5,301.2 1309.3,302.1 1311.3,304.3 1312.9,305.7 1313.9,305.8 1314.3,306.8 1314.9,307.9 1315.2,308.6 1316.4,309.0 1316.6,310.7 1316.8,312.4 1317.1,312.8 1318.0,313.9 1318.9,314.4 1319.2,313.6 1319.7,313.6 1319.9,314.7 1320.8,315.6 1322.1,316.4 1322.6,317.2 1325.4,318.2 1325.4,319.3 1323.4,320.4 1323.1,321.8 1324.3,322.9 1324.8,324.0 1326.8,324.8 1327.0,326.5 1326.8,328.5 1326.2,328.7 1325.6,329.0 1326.2,330.7 1325.6,332.4 1324.0,334.0 1322.3,334.6 1320.4,335.7 1318.4,336.3 1317.0,335.7 1315.6,334.0 1314.5,334.4 1313.1,334.6 1311.7,335.4 1311.2,335.7 1312.3,337.4 1312.8,338.8 1312.0,339.7 1310.9,339.3 1309.5,339.0 1308.4,338.4 1307.0,338.2 1304.5,337.4 1303.6,336.5 1303.5,335.7 1304.5,335.2 1305.6,334.6 1306.6,333.2 1306.9,331.2 1306.4,329.9 1306.9,328.7 1306.0,327.6 1306.7,326.2 1306.0,326.0 1306.2,325.4 1307.3,324.7 1307.5,323.6 1307.4,322.2 1306.0,321.4 1304.9,320.0 1305.0,319.0 1304.1,318.5 1301.8,317.8 1301.3,316.1 1300.2,315.0 1299.0,313.3 1298.9,311.1 1299.0,309.6 1299.0,307.9 1299.4,306.2 1299.3,304.3 1297.9,302.6 1295.9,301.2 1294.3,299.7 1293.3,298.1 1292.4,296.6 1291.4,295.1 1290.3,295.7 1290.1,295.2 1288.7,294.9 1287.9,294.4 1286.0,294.0 1284.8,294.2 1284.3,294.9 1284.8,295.2 1284.7,295.5 1283.5,295.9 1283.4,296.6 1282.8,297.8 1282.7,298.5 1282.2,298.9 1281.5,298.5 1280.6,298.8 1279.7,299.4 1279.2,300.0 1278.9,300.6 1278.3,300.3 1276.6,298.2 1275.3,297.5 1274.0,296.6 1272.7,296.4 1272.6,297.1 1271.5,298.2 1270.2,297.8 1269.6,299.3 1268.9,299.7 1268.0,300.0 1267.8,300.8 1266.4,301.5 1264.7,303.2 1264.1,304.0 1262.2,302.9 1261.6,302.8 1262.3,300.9 1262.7,299.8 1263.6,298.8 1264.3,297.8 1264.3,296.4 1264.0,295.8 1264.3,295.1 1263.1,294.0 1263.2,294.5 1263.4,293.5 1264.7,292.0 1265.0,290.3 1265.1,288.6 1265.8,287.8 1265.0,287.0 1264.8,285.3 1264.6,283.9 1265.1,283.4 1265.1,282.4 1262.9,281.8 1261.5,281.8 1260.2,283.2 1259.3,282.5 1258.4,282.9 1257.3,281.7 1256.9,280.3 1258.0,278.2 1258.1,276.3 1257.3,276.0 1256.3,274.1 1255.4,273.9 1254.2,275.3 1253.5,274.9 1254.0,272.7 1254.8,271.0 1256.7,269.3 1258.7,269.1 1257.9,268.5 1258.0,267.4 1259.4,266.1 1259.8,264.3 1262.3,263.5 1264.1,261.7 1264.5,262.1 1263.8,263.3 1264.8,264.9 1265.4,265.6 1266.8,265.0 1268.2,265.0 1268.7,265.1 1270.1,265.3 1269.7,264.3 1269.8,262.7 1270.0,260.4 1269.8,258.7 1269.6,257.6 1268.7,256.5 1268.3,255.4 1268.3,254.4 1269.5,253.1 1271.8,252.1 1273.9,253.8"/>
<polyline points="1258.7,269.1 1260.6,271.0 1261.2,272.5 1262.3,272.9 1263.3,274.8"/>
<polyline points="1270.1,265.3 1269.8,267.1 1268.3,267.9 1267.3,269.3 1266.6,270.4 1267.9,271.6 1268.0,272.7 1267.0,274.2 1264.8,274.6 1263.3,274.8"/>
<polyline points="1264.9,274.6 1264.9,275.4 1264.5,276.6 1263.1,276.6 1261.7,277.8 1260.0,278.2 1260.1,278.8"/>
<polyline points="1256.9,280.3 1258.3,280.0 1260.5,279.0 1261.7,279.4 1262.9,279.6 1263.7,279.2 1264.9,279.8 1266.9,279.8 1268.5,279.6 1269.7,278.8 1271.5,278.2 1272.7,277.4 1273.7,276.2 1274.1,275.8"/>
<polyline points="1270.1,265.3 1272.6,266.3 1274.3,267.4 1275.7,268.5 1276.2,269.2 1276.8,269.1 1278.3,268.2 1279.8,267.4 1280.2,266.1 1281.4,266.0"/>
<polyline points="1275.7,269.1 1275.5,270.7 1274.4,272.1 1273.7,273.8 1273.7,275.5 1274.1,275.8"/>
<polyline points="1286.1,269.7 1284.4,270.2 1284.0,271.0 1284.0,272.7 1283.6,273.2 1284.3,273.9 1284.0,275.2 1283.6,276.0 1283.2,277.1 1283.2,278.7"/>
<polyline points="1283.2,278.7 1285.0,278.9 1286.4,279.1 1288.3,278.5 1289.2,277.7 1290.0,278.0 1290.4,279.2 1291.4,280.0 1292.5,279.6 1293.3,279.2 1293.6,280.0 1293.4,281.1"/>
<polyline points="1283.2,278.7 1281.6,279.7 1280.8,280.8 1280.0,281.7 1278.7,282.8 1278.6,283.9 1279.3,285.2"/>
<polyline points="1269.7,278.8 1269.9,280.2 1269.9,281.6 1270.3,283.4 1271.2,284.2 1270.5,285.8 1270.3,287.8"/>
<polyline points="1270.3,287.8 1270.3,288.9 1270.7,290.0 1270.1,292.3 1268.7,293.6 1267.6,294.7 1266.7,295.7 1266.4,296.7 1266.5,298.8 1266.9,299.7 1268.0,300.0"/>
<polyline points="1270.3,287.8 1271.2,287.0 1272.1,285.6 1273.1,284.2 1274.7,284.2 1276.5,284.6 1277.5,286.0"/>
<polyline points="1277.5,286.0 1279.3,285.2 1281.4,286.1 1284.2,286.8 1286.4,286.7 1287.8,287.4 1289.4,287.9 1290.6,288.1 1290.6,289.6"/>
<polyline points="1290.6,289.6 1291.8,290.0 1292.8,290.2 1293.6,289.5 1294.2,288.4 1294.3,287.2"/>
<polyline points="1277.5,286.0 1277.2,286.7 1277.5,288.1 1277.9,290.0 1278.0,291.2 1279.2,292.8 1279.3,293.6"/>
<polyline points="1279.3,293.6 1280.2,293.3 1281.6,293.3 1283.5,293.1 1285.7,293.0 1286.0,292.7 1286.8,292.0 1286.8,290.9 1286.9,288.9 1287.5,288.8 1289.4,290.0 1290.6,289.6"/>
<polyline points="1280.2,293.3 1280.3,293.7 1280.9,294.6 1281.1,295.5 1281.8,295.9 1282.1,296.5 1283.4,296.6"/>
<polyline points="1272.7,296.4 1272.6,294.3 1273.5,294.2 1274.6,294.2 1275.1,295.2 1275.8,295.3 1277.3,295.9 1278.0,296.3 1278.7,295.9 1279.7,295.4 1281.1,295.5"/>
<polyline points="1294.3,299.7 1295.1,298.2 1295.8,296.8 1296.8,296.4 1298.5,297.2 1299.7,298.0 1300.8,299.0 1302.1,299.0 1303.0,297.9 1304.0,297.0 1303.9,295.8"/>
<polyline points="1315.2,308.6 1312.9,307.9 1312.4,307.8 1310.7,308.3 1307.9,307.6 1307.1,308.2 1304.6,308.0 1302.9,307.8 1301.5,307.6 1300.1,308.2 1299.6,309.0 1299.0,309.6"/>
<polyline points="1319.1,314.6 1318.8,315.3 1317.7,315.6 1317.4,316.8 1316.3,316.9 1314.2,317.8 1313.8,317.2 1312.5,317.4 1312.3,319.2 1310.7,320.0 1309.1,320.0 1306.8,319.3 1305.0,319.0"/>
<polyline points="1307.3,324.7 1308.8,324.5 1311.0,324.3 1312.1,324.7 1312.1,325.6 1313.0,326.1 1314.6,325.0 1316.0,325.3 1317.7,326.7 1318.0,327.5"/>
<polyline points="1322.4,317.1 1320.8,317.8 1319.4,318.5 1318.0,320.6 1317.7,321.4 1318.1,322.2 1317.8,323.3 1316.3,323.6 1314.6,323.9 1314.2,324.5 1314.6,325.0"/>
<polyline points="1318.0,327.5 1318.4,326.5 1320.1,326.2 1322.3,326.1 1324.3,327.1 1325.4,326.8 1326.2,327.9 1326.8,328.5"/>
<polyline points="1318.0,327.5 1319.1,328.6 1319.2,328.7 1319.0,329.9 1318.0,331.0 1316.7,331.2 1315.9,330.7 1315.9,329.0 1314.2,329.0 1313.4,330.1 1313.1,331.2 1313.7,332.4 1314.4,333.5 1314.5,334.4"/>
</g></svg>
<div class="a" style="left:694px;top:835px;width:25px;height:26px;background:#fff;box-shadow:1px 2px 4px rgba(0,0,0,.4)"></div>
<svg class="a" style="left:694px;top:835px" width="25" height="26" viewBox="0 0 25 26"><rect x="3" y="3.7" width="5" height="4.5" fill="#7f2704"/><rect x="3" y="10.8" width="5" height="4.5" fill="#d94801"/><rect x="3" y="17.8" width="5" height="4.5" fill="#fd8d3c"/><g stroke="#000" stroke-width="2.1" stroke-linecap="round"><path d="M10.6 6h11.4M10.6 13h11.4M10.6 20h11.4"/></g></svg>
<div class="a" style="left:694px;top:869px;width:25px;height:26px;background:#fff;box-shadow:1px 2px 4px rgba(0,0,0,.4)"></div>
<svg class="a" style="left:694px;top:869px" width="25" height="26" viewBox="0 0 25 26" fill="none" stroke="#111" stroke-width="1.7"><path d="M7.9 11.2V8.9h2.6M14.4 8.9h2.6v2.3M17 14.7v2.3h-2.6M10.5 17H7.9v-2.3"/></svg>
<div class="a" style="left:1146px;top:889px;width:216px;height:13px;background:rgba(255,255,255,.8)"></div>
<div class="a" style="left:1149.8px;top:890.5px;width:195px;overflow:hidden;white-space:nowrap;font-size:9.2px;line-height:12px;color:#333"><span style="color:#2a7bb6">Leaflet</span> | © <span style="color:#2a7bb6">OpenStreetMap</span> contributors © <span style="color:#2a7bb6">CARTO</span></div>
<div class="a" style="left:1345px;top:886px;width:17px;height:16px;background:#fff"></div>
<div class="rh" style="left:1352px;top:892px"></div>
<div class="a" style="left:217px;top:85px;width:3px;height:104px;background:#f7f7f7"></div>
<div class="a" style="left:408px;top:85px;width:3px;height:104px;background:#f7f7f7"></div>
<div class="a" style="left:599px;top:85px;width:3px;height:104px;background:#f7f7f7"></div>
<div class="a" style="left:790px;top:85px;width:3px;height:104px;background:#f7f7f7"></div>
<div class="a" style="left:981px;top:85px;width:3px;height:104px;background:#f7f7f7"></div>
<div class="a" style="left:1172px;top:85px;width:3px;height:104px;background:#f7f7f7"></div>
<div class="a" style="left:0;top:189px;width:1365px;height:3px;background:#f7f7f7"></div>
<div class="a" style="left:682px;top:192px;width:2px;height:712px;background:#f7f7f7"></div>

</body></html>
